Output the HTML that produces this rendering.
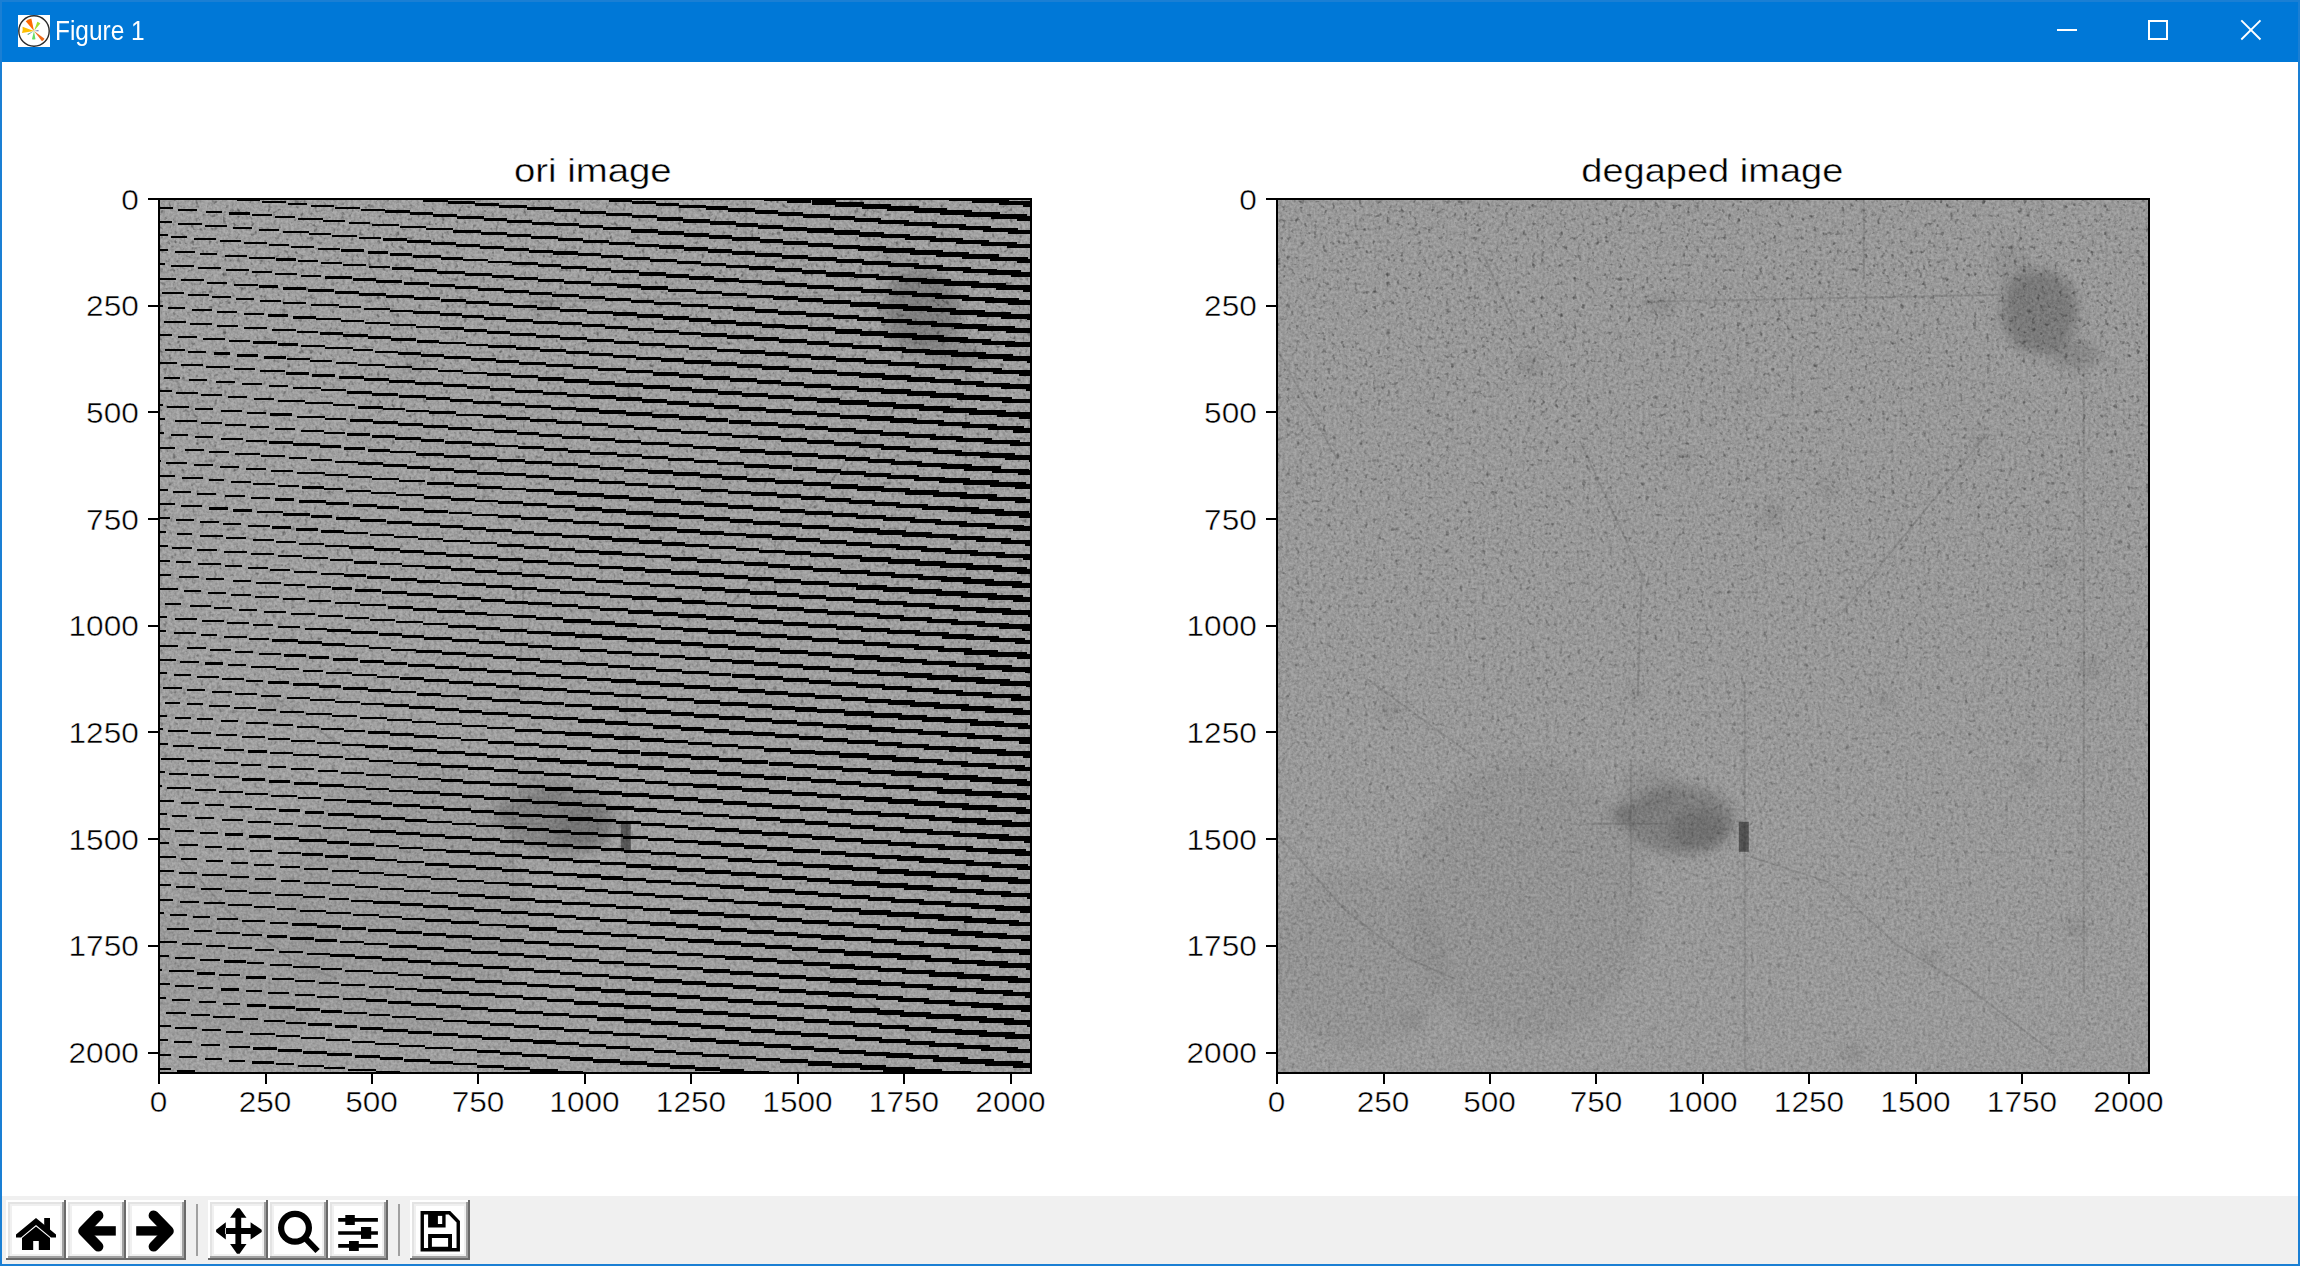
<!DOCTYPE html>
<html><head><meta charset="utf-8"><title>Figure 1</title><style>
html,body{margin:0;padding:0;width:2300px;height:1266px;overflow:hidden;background:#fff;font-family:"Liberation Sans",sans-serif;}
#win{position:absolute;left:0;top:0;width:2300px;height:1266px;background:#1a7fd4;}
#title{position:absolute;left:2px;top:2px;width:2296px;height:60px;background:#0078d7;}
#canvas{position:absolute;left:2px;top:62px;width:2296px;height:1134px;background:#fff;}
#tb{position:absolute;left:2px;top:1196px;width:2296px;height:68px;background:#f0f0f0;}
.ttxt{position:absolute;left:53px;top:13.6px;color:#fff;font-size:27px;line-height:30px;white-space:nowrap;transform:scaleX(0.905);transform-origin:0 0;}
svg{position:absolute;left:0;top:0;}
.tl{font-size:29px;stroke:#fff;stroke-width:0.45px;}
.tt{font-size:34px;stroke:#fff;stroke-width:0.4px;}
.btn{top:4px;}
.sep{position:absolute;top:8px;width:2px;height:52px;background:#a0a0a0;}
</style></head><body>
<div id="win">
<div id="title">
<svg width="32" height="32" viewBox="0 0 32 32" style="left:16px;top:13px"><rect width="32" height="32" fill="#fff"/><circle cx="16" cy="16" r="15.2" fill="#fff" stroke="#2a2a2a" stroke-width="1.4"/><path d="M16 16L7.77 6.19A12.8 12.8 0 0 1 13.34 3.48Z" fill="#ff6a00"/><path d="M16 16L4.54 11.83A12.2 12.2 0 0 1 3.99 18.12Z" fill="#ffbf00"/><path d="M16 16L19.35 6.79A9.8 9.8 0 0 1 22.30 8.49Z" fill="#a6dd2a"/><path d="M16 16L26.52 23.64A13.0 13.0 0 0 1 24.00 26.24Z" fill="#ee6a1a"/><path d="M16 16L17.46 24.27A8.4 8.4 0 0 1 13.97 24.15Z" fill="#66dd66"/><path d="M16 16L10.03 20.03A7.2 7.2 0 0 1 9.42 18.93Z" fill="#4a9a8a"/><path d="M16 16L20.46 15.37A4.5 4.5 0 0 1 20.50 16.16Z" fill="#334a99"/></svg>
<div class="ttxt">Figure 1</div>
<svg width="2296" height="60" style="left:0;top:0">
<rect x="2055" y="27" width="20" height="2" fill="#fff"/>
<rect x="2147" y="19" width="18" height="18" fill="none" stroke="#fff" stroke-width="2"/>
<path d="M2239.3 18.3L2258.5 37.5M2258.5 18.3L2239.3 37.5" stroke="#fff" stroke-width="1.9" fill="none"/>
</svg>
</div>
<div id="canvas"></div>
<div id="tb"><svg class="btn" style="left:4px" width="60" height="60" viewBox="0 0 60 60"><rect width="60" height="60" fill="#fff"/><path d="M58 0H60V60H0V58H58Z" fill="#696969"/><path d="M2 2H58V4H4V56H2Z" fill="#e3e3e3"/><path d="M56 2H58V58H2V56H56Z" fill="#a0a0a0"/><path d="M4 4H56V6H6V54H4Z M54 4H56V56H4V54H54Z" fill="#f0f0f0"/><path d="M10 34.5L30 18L50 34.5V37.5H45L30 25L15 37.5H10Z"/><rect x="38.2" y="18" width="5.8" height="13"/><path d="M16 38L30 26.4L44 38V50H32.8V41H27.2V50H16Z"/></svg><svg class="btn" style="left:64px" width="60" height="60" viewBox="0 0 60 60"><rect width="60" height="60" fill="#fff"/><path d="M58 0H60V60H0V58H58Z" fill="#696969"/><path d="M2 2H58V4H4V56H2Z" fill="#e3e3e3"/><path d="M56 2H58V58H2V56H56Z" fill="#a0a0a0"/><path d="M4 4H56V6H6V54H4Z M54 4H56V56H4V54H54Z" fill="#f0f0f0"/><path d="M32.3 15.5L17.3 31L32.3 46.5" stroke="#000" stroke-width="10.2" fill="none" stroke-linecap="round" stroke-linejoin="round"/><path d="M24 26.2H49.8V35.6H24Z"/></svg><svg class="btn" style="left:124px" width="60" height="60" viewBox="0 0 60 60"><rect width="60" height="60" fill="#fff"/><path d="M58 0H60V60H0V58H58Z" fill="#696969"/><path d="M2 2H58V4H4V56H2Z" fill="#e3e3e3"/><path d="M56 2H58V58H2V56H56Z" fill="#a0a0a0"/><path d="M4 4H56V6H6V54H4Z M54 4H56V56H4V54H54Z" fill="#f0f0f0"/><path d="M27.7 15.5L42.7 31L27.7 46.5" stroke="#000" stroke-width="10.2" fill="none" stroke-linecap="round" stroke-linejoin="round"/><path d="M10.2 26.2H36V35.6H10.2Z"/></svg><div class="sep" style="left:194px"></div><svg class="btn" style="left:206px" width="60" height="60" viewBox="0 0 60 60"><rect width="60" height="60" fill="#fff"/><path d="M58 0H60V60H0V58H58Z" fill="#696969"/><path d="M2 2H58V4H4V56H2Z" fill="#e3e3e3"/><path d="M56 2H58V58H2V56H56Z" fill="#a0a0a0"/><path d="M4 4H56V6H6V54H4Z M54 4H56V56H4V54H54Z" fill="#f0f0f0"/><path d="M27.4 17H33.2V44H27.4Z M17 28.1H44V33.9H17Z M22.1 17.8L29 8.3H31.6L38.5 17.8Z M22.1 44.1H38.5L31.6 53.7H29Z M17.8 22.3L8.1 29.7V32.1L17.8 39.5Z M42.6 22.3L53.7 29.7V32.1L42.6 39.5Z"/></svg><svg class="btn" style="left:266px" width="60" height="60" viewBox="0 0 60 60"><rect width="60" height="60" fill="#fff"/><path d="M58 0H60V60H0V58H58Z" fill="#696969"/><path d="M2 2H58V4H4V56H2Z" fill="#e3e3e3"/><path d="M56 2H58V58H2V56H56Z" fill="#a0a0a0"/><path d="M4 4H56V6H6V54H4Z M54 4H56V56H4V54H54Z" fill="#f0f0f0"/><circle cx="27" cy="27.8" r="13.9" stroke="#000" stroke-width="6.2" fill="none"/><path d="M36.5 37.5L49.6 51" stroke="#000" stroke-width="6"/></svg><svg class="btn" style="left:326px" width="60" height="60" viewBox="0 0 60 60"><rect width="60" height="60" fill="#fff"/><path d="M58 0H60V60H0V58H58Z" fill="#696969"/><path d="M2 2H58V4H4V56H2Z" fill="#e3e3e3"/><path d="M56 2H58V58H2V56H56Z" fill="#a0a0a0"/><path d="M4 4H56V6H6V54H4Z M54 4H56V56H4V54H54Z" fill="#f0f0f0"/><path d="M10.2 19.9H49.9M10.2 33H49.9M10.2 45.9H49.9" stroke="#000" stroke-width="3.6"/><rect x="17.3" y="15" width="9.5" height="10"/><rect x="33" y="27" width="10.2" height="11.9"/><rect x="21" y="41" width="9.8" height="10"/></svg><div class="sep" style="left:396px"></div><svg class="btn" style="left:408px" width="60" height="60" viewBox="0 0 60 60"><rect width="60" height="60" fill="#fff"/><path d="M58 0H60V60H0V58H58Z" fill="#696969"/><path d="M2 2H58V4H4V56H2Z" fill="#e3e3e3"/><path d="M56 2H58V58H2V56H56Z" fill="#a0a0a0"/><path d="M4 4H56V6H6V54H4Z M54 4H56V56H4V54H54Z" fill="#f0f0f0"/><path d="M12.25 12.75H39.5L48.25 21.8V49.75H12.25Z" stroke="#000" stroke-width="3.4" fill="none"/><path d="M18.1 12.75H35.6V27.5H18.1Z"/><rect x="27.9" y="15.9" width="4.3" height="8.1" fill="#fff"/><path d="M18.1 34.1H42V49.75H18.1Z M21.9 38.1V46.7H38.1V38.1Z" fill-rule="evenodd"/></svg></div>
</div>
<svg width="2300" height="1266" viewBox="0 0 2300 1266">
<defs>
<filter id="n0" x="0" y="0" width="100%" height="100%" color-interpolation-filters="sRGB">
<feTurbulence type="fractalNoise" baseFrequency="0.35" numOctaves="2" seed="3"/>
<feColorMatrix type="matrix" values="0 0 0 0 0  0 0 0 0 0  0 0 0 0 0  0.35 0 0 0 -0.1"/>
</filter>
<filter id="sp" x="0" y="0" width="100%" height="100%" color-interpolation-filters="sRGB">
<feTurbulence type="fractalNoise" baseFrequency="0.22" numOctaves="2" seed="17"/>
<feColorMatrix type="matrix" values="0 0 0 0 0  0 0 0 0 0  0 0 0 0 0  1.5 0 0 0 -0.9"/>
</filter>
<filter id="bl" x="-50%" y="-50%" width="200%" height="200%"><feGaussianBlur stdDeviation="6"/></filter>
<linearGradient id="mg" x1="0" y1="0" x2="0" y2="1"><stop offset="0" stop-color="#fff"/><stop offset="0.45" stop-color="#bbb"/><stop offset="1" stop-color="#555"/></linearGradient>
<mask id="mk" maskContentUnits="objectBoundingBox"><rect width="1" height="1" fill="url(#mg)"/></mask>
<clipPath id="c0"><rect x="158.8" y="198.8" width="872.4" height="874"/></clipPath><clipPath id="c1"><rect x="1276.8" y="198.8" width="872.4" height="874"/></clipPath>
</defs>
<rect x="158.8" y="198.8" width="872.4" height="874" fill="#adadad"/>
<rect x="158.8" y="198.8" width="872.4" height="874" filter="url(#n0)"/>
<rect x="158.8" y="198.8" width="872.4" height="874" filter="url(#sp)" mask="url(#mk)"/>
<g clip-path="url(#c0)"><g transform="translate(158.8 198.8)"><g filter="url(#bl)"><ellipse cx="763" cy="113" rx="38" ry="42" opacity="0.2"/><ellipse cx="798" cy="156" rx="25" ry="14" opacity="0.12"/><ellipse cx="735" cy="70" rx="18" ry="26" opacity="0.05"/><ellipse cx="403" cy="621" rx="55" ry="35" opacity="0.17"/><ellipse cx="423" cy="631" rx="30" ry="20" opacity="0.12"/><ellipse cx="373" cy="591" rx="30" ry="25" opacity="0.06"/><ellipse cx="345" cy="615" rx="9" ry="9" opacity="0.25"/><ellipse cx="254" cy="166" rx="10" ry="10" opacity="0.08"/><ellipse cx="113" cy="511" rx="10" ry="8" opacity="0.08"/><ellipse cx="551" cy="290" rx="8" ry="8" opacity="0.08"/><ellipse cx="814" cy="469" rx="10" ry="10" opacity="0.08"/><ellipse cx="751" cy="573" rx="8" ry="8" opacity="0.08"/><ellipse cx="137" cy="822" rx="10" ry="8" opacity="0.08"/><ellipse cx="385" cy="107" rx="12" ry="6" opacity="0.12"/><ellipse cx="250" cy="700" rx="120" ry="140" opacity="0.035"/><ellipse cx="80" cy="760" rx="90" ry="90" opacity="0.03"/><ellipse cx="496" cy="316" rx="9" ry="9" opacity="0.1"/><ellipse cx="406" cy="258" rx="7" ry="7" opacity="0.08"/><ellipse cx="779" cy="365" rx="8" ry="8" opacity="0.08"/><ellipse cx="607" cy="500" rx="8" ry="7" opacity="0.08"/><ellipse cx="800" cy="728" rx="9" ry="8" opacity="0.09"/><ellipse cx="655" cy="759" rx="8" ry="8" opacity="0.08"/><ellipse cx="576" cy="855" rx="8" ry="9" opacity="0.09"/><ellipse cx="358" cy="496" rx="7" ry="7" opacity="0.07"/><ellipse cx="703" cy="241" rx="7" ry="7" opacity="0.07"/><ellipse cx="469" cy="193" rx="8" ry="6" opacity="0.07"/></g><rect x="462" y="623" width="10" height="30" opacity="0.45"/><path d="M365 103L724 96M807 172V794M565 414L710 235M206 55L241 131M303 242L365 376L361 497M0 635L68 711L130 759L178 780M468 656L551 683L620 746L689 787L779 856M468 483V870M311 625H391M354 560V700M587 0V80M0 150L60 260M90 480L200 560" stroke="#000" stroke-width="2" fill="none" opacity="0.1"/></g></g>
<g clip-path="url(#c0)"><path d="M921.6 194.9h33.7v4.4h-33.7zM948.6 196.8h31.8v4.5h-31.8zM972.3 198.7h36.4v4.6h-36.4zM999.2 200.7h32v4.6h-32zM1023.1 202.5h8.1v4.7h-8.1zM741.6 195h22.3v3.9h-22.3zM763.9 196.8h23.2v3.9h-23.2zM787 198.6h24.4v4h-24.4zM811.5 200.4h24.1v4.1h-24.1zM835 202.3h28.7v4.2h-28.7zM861.8 204.3h28.8v4.3h-28.8zM887.2 206.3h32v4.3h-32zM914.4 208.4h32.3v4.4h-32.3zM940.4 210.3h31.2v4.5h-31.2zM964 212.2h36v4.6h-36zM990.9 214.2h36.4v4.6h-36.4zM1016.8 216.3h14.4v4.7h-14.4zM581 197.2h27.8v3.2h-27.8zM608.7 199.1h23.3v3.3h-23.3zM632.1 200.9h23.8v3.4h-23.8zM655.9 202.7h22.9v3.5h-22.9zM678.9 204.6h26.6v3.6h-26.6zM705.5 206.4h22.1v3.7h-22.1zM727.6 208.3h27.5v3.8h-27.5zM755.1 210.2h22.9v3.9h-22.9zM778 212h25.4v4h-25.4zM803.4 214h26.6v4.1h-26.6zM829.8 215.9h25.6v4.2h-25.6zM853.9 217.8h26.7v4.2h-26.7zM877.6 219.7h30.9v4.3h-30.9zM904.2 221.8h33.2v4.4h-33.2zM931.7 223.9h34.2v4.5h-34.2zM958.6 225.8h32.8v4.5h-32.8zM982.7 227.7h35v4.6h-35zM1007.7 229.5h23.5v4.7h-23.5zM1030.1 231.3h1.1v4.7h-1.1zM396.7 197.2h26.4v2.6h-26.4zM423.3 199.1h24.3v2.7h-24.3zM447.6 201.1h27.6v2.8h-27.6zM475.1 203.1h23.8v2.9h-23.8zM499 205h27.9v2.9h-27.9zM526.9 207.1h26.8v3h-26.8zM553.6 209.1h26.6v3.1h-26.6zM580.2 211.1h25.5v3.2h-25.5zM605.7 213.1h26.4v3.3h-26.4zM632.1 215h24.7v3.4h-24.7zM656.8 217h25.9v3.5h-25.9zM682.7 219h27.1v3.6h-27.1zM709.8 221h26v3.7h-26zM735.8 222.8h22.5v3.8h-22.5zM758.3 224.6h24.2v3.9h-24.2zM782.5 226.5h24.6v4h-24.6zM807.1 228.4h27v4.1h-27zM833.6 230.4h26.8v4.2h-26.8zM858.6 232.2h25.4v4.3h-25.4zM880.9 234h28.6v4.3h-28.6zM905.1 235.9h31.1v4.4h-31.1zM930.4 237.8h32.9v4.5h-32.9zM956.1 239.8h33v4.5h-33zM980.6 241.7h36.4v4.6h-36.4zM1007.1 243.6h24.1v4.7h-24.1zM1029.7 245.3h1.5v4.7h-1.5zM213.7 197.1h21.2v2.1h-21.2zM237.3 199h23v2.2h-23zM262.4 201h24v2.2h-24zM288 202.8h19.4v2.3h-19.4zM310.6 204.6h23.7v2.3h-23.7zM335.3 206.6h24.6v2.4h-24.6zM360.9 208.5h24.1v2.5h-24.1zM385 210.3h24.5v2.6h-24.5zM409.5 212.1h23v2.6h-23zM432.5 213.9h24.5v2.7h-24.5zM457.1 215.9h27.2v2.8h-27.2zM484.3 217.8h23.1v2.9h-23.1zM507.4 219.7h24.9v3h-24.9zM532.3 221.5h22.1v3.1h-22.1zM554.4 223.2h24.7v3.1h-24.7zM579.1 225.1h23.7v3.2h-23.7zM602.8 227.1h28v3.3h-28zM630.7 229.2h27.1v3.4h-27.1zM657.8 231.2h25.7v3.5h-25.7zM683.5 233.1h25.3v3.6h-25.3zM708.8 234.9h22.9v3.7h-22.9zM731.7 236.9h27.8v3.8h-27.8zM759.5 238.8h23.8v3.9h-23.8zM783.3 240.7h24.8v4h-24.8zM808.1 242.6h25.2v4.1h-25.2zM832.9 244.5h27v4.2h-27zM858.1 246.4h28.3v4.3h-28.3zM883.2 248.4h31.6v4.3h-31.6zM910.2 250.4h32.3v4.4h-32.3zM936.4 252.4h32.7v4.5h-32.7zM961.6 254.4h36.9v4.5h-36.9zM989.6 256.6h37.9v4.6h-37.9zM1017 258.5h14.2v4.7h-14.2zM158.8 206.6h13.7v2h-13.7zM178.4 208.7h18.7v2h-18.7zM205.5 210.6h16.7v2.1h-16.7zM228.9 212.4h20.8v2.1h-20.8zM252.3 214.2h19.9v2.2h-19.9zM275 216h19.7v2.3h-19.7zM298.3 217.8h24.6v2.3h-24.6zM322.9 219.7h21.7v2.4h-21.7zM348.6 221.6h21.6v2.5h-21.6zM372.2 223.6h27.2v2.5h-27.2zM399.5 225.6h26.8v2.6h-26.8zM426.3 227.7h26.5v2.7h-26.5zM452.8 229.7h27.7v2.8h-27.7zM480.5 231.8h26.8v2.9h-26.8zM507.2 233.7h23.5v3h-23.5zM530.8 235.7h27.1v3.1h-27.1zM557.9 237.6h24.9v3.1h-24.9zM582.8 239.6h26.5v3.2h-26.5zM609.3 241.6h25.4v3.3h-25.4zM634.7 243.5h24.6v3.4h-24.6zM659.3 245.3h24.2v3.5h-24.2zM683.5 247.2h24.6v3.6h-24.6zM708 249h23.9v3.7h-23.9zM731.9 250.8h22.7v3.8h-22.7zM754.6 252.7h26.9v3.9h-26.9zM781.5 254.7h26.8v4h-26.8zM808.3 256.8h28.4v4.1h-28.4zM836.2 258.9h28.1v4.2h-28.1zM862.4 260.8h28.7v4.3h-28.7zM887.7 262.8h31.3v4.3h-31.3zM914.2 264.7h29v4.4h-29zM937 266.6h33.6v4.5h-33.6zM963.1 268.5h33.6v4.5h-33.6zM987.7 270.4h33.3v4.6h-33.3zM1010.8 272.1h20.4v4.7h-20.4zM158.8 220.7h12.7v2h-12.7zM177.7 222.8h24.1v2h-24.1zM205.3 224.9h21.8v2.1h-21.8zM232.8 227h19.4v2.2h-19.4zM259.4 228.9h20v2.2h-20zM282.9 230.8h25.9v2.3h-25.9zM308.9 232.7h22v2.3h-22zM332 234.6h24.5v2.4h-24.5zM359.4 236.5h21.9v2.5h-21.9zM382.6 238.4h24.1v2.6h-24.1zM406.7 240.2h24.4v2.6h-24.4zM431.1 242.1h25.3v2.7h-25.3zM456.4 244h23.6v2.8h-23.6zM480 245.8h24v2.9h-24zM504 247.7h25v3h-25zM529.1 249.5h23.9v3h-23.9zM553 251.4h25.2v3.1h-25.2zM578.2 253.2h22.3v3.2h-22.3zM600.5 254.9h22v3.3h-22zM622.5 256.8h27v3.4h-27zM649.5 258.8h27.3v3.5h-27.3zM676.8 260.8h24.1v3.6h-24.1zM700.9 262.6h25.1v3.7h-25.1zM725.9 264.5h23.3v3.8h-23.3zM749.2 266.4h25.9v3.9h-25.9zM775.1 268.4h27.3v4h-27.3zM802.4 270.3h23.5v4.1h-23.5zM825.9 272.3h29.2v4.2h-29.2zM853.6 274.2h25.3v4.2h-25.3zM876 275.9h26.7v4.3h-26.7zM898.7 277.6h28.1v4.4h-28.1zM921.4 279.4h29.2v4.4h-29.2zM944 281.3h35.3v4.5h-35.3zM971.4 283.3h34.4v4.6h-34.4zM996.4 285.3h34.8v4.6h-34.8zM1023.2 287.3h8v4.7h-8zM158.8 234.4h8.7v2h-8.7zM171.1 236.2h15.6v2h-15.6zM194.4 238.1h21.1v2.1h-21.1zM219.5 240h21.9v2.1h-21.9zM243.8 241.9h23.2v2.2h-23.2zM268.6 243.7h19.9v2.2h-19.9zM290.8 245.6h23.3v2.3h-23.3zM317.8 247.5h22.3v2.4h-22.3zM340.7 249.4h23.7v2.4h-23.7zM367.5 251.3h20.6v2.5h-20.6zM390.3 253h21.5v2.6h-21.5zM413 254.9h27.6v2.7h-27.6zM440.6 256.8h22.1v2.7h-22.1zM462.6 258.6h25.3v2.8h-25.3zM487.9 260.5h24.4v2.9h-24.4zM512.3 262.4h25.6v3h-25.6zM537.9 264.3h23.5v3.1h-23.5zM561.4 266.2h25.1v3.2h-25.1zM586.4 268.1h24.9v3.3h-24.9zM611.4 270h27.3v3.4h-27.3zM638.6 272.1h27.3v3.5h-27.3zM665.9 274h22.7v3.6h-22.7zM688.6 275.9h25.8v3.6h-25.8zM714.4 277.8h24.4v3.7h-24.4zM738.9 279.6h23v3.8h-23zM761.9 281.3h22.8v3.9h-22.8zM784.7 283h22.6v4h-22.6zM807.2 284.9h27.1v4.1h-27.1zM833.9 287h29v4.2h-29zM861 289.1h31v4.3h-31zM888.6 291h28.5v4.3h-28.5zM912.3 292.8h29.2v4.4h-29.2zM935.3 294.7h33.9v4.5h-33.9zM961.8 296.6h31.8v4.5h-31.8zM984.7 298.4h33.8v4.6h-33.8zM1008.4 300.3h22.8v4.7h-22.8zM158.8 248.6h9.6v2h-9.6zM174.6 250.7h20v2h-20zM200.3 252.6h16.6v2.1h-16.6zM224.8 254.5h22v2.1h-22zM249.4 256.5h25.6v2.2h-25.6zM276.1 258.4h19.4v2.3h-19.4zM298.4 260.1h19.1v2.3h-19.1zM320.8 261.8h21.6v2.4h-21.6zM343.2 263.7h23.1v2.4h-23.1zM369.2 265.5h20.3v2.5h-20.3zM391.6 267.2h22.4v2.6h-22.4zM414 268.9h22.6v2.7h-22.6zM436.6 270.9h27.9v2.7h-27.9zM464.5 273h27v2.8h-27zM491.5 274.8h22v2.9h-22zM513.5 276.6h24.2v3h-24.2zM537.7 278.5h26v3.1h-26zM563.6 280.5h26.9v3.2h-26.9zM590.5 282.5h26v3.3h-26zM616.5 284.4h24.4v3.4h-24.4zM640.9 286.4h27v3.5h-27zM667.9 288.5h27.8v3.6h-27.8zM695.7 290.5h26.5v3.7h-26.5zM722.2 292.5h25.2v3.8h-25.2zM747.4 294.5h26.1v3.9h-26.1zM773.4 296.4h24.1v4h-24.1zM797.6 298.2h25.3v4.1h-25.3zM822.9 300.2h28.4v4.2h-28.4zM850 302.3h29.9v4.2h-29.9zM877.1 304.4h30.4v4.3h-30.4zM903.3 306.3h28.9v4.4h-28.9zM926.6 308h29.7v4.4h-29.7zM949.5 310h35.6v4.5h-35.6zM976.8 311.9h34.3v4.6h-34.3zM1001.4 313.9h29.8v4.7h-29.8zM1026.8 315.7h4.4v4.7h-4.4zM158.8 262.6h6.4v2h-6.4zM171.1 264.6h22.9v2h-22.9zM197.9 266.7h23.4v2.1h-23.4zM225.9 268.8h23.5v2.1h-23.5zM251.6 270.7h20v2.2h-20zM275.1 272.6h22.1v2.3h-22.1zM301.4 274.5h19.8v2.3h-19.8zM325.3 276.4h26.9v2.4h-26.9zM352.5 278.4h23.8v2.5h-23.8zM376.3 280.4h25.5v2.5h-25.5zM403.9 282.4h25v2.6h-25zM429.9 284.3h24.7v2.7h-24.7zM454.6 286.2h23.7v2.8h-23.7zM478.3 288.1h25.8v2.9h-25.8zM504.1 290h25.1v3h-25.1zM529.3 291.9h22.8v3h-22.8zM552 293.8h27.4v3.1h-27.4zM579.4 295.8h25.3v3.2h-25.3zM604.8 297.7h25.9v3.3h-25.9zM630.6 299.6h23.8v3.4h-23.8zM654.4 301.5h26.5v3.5h-26.5zM680.9 303.6h27.1v3.6h-27.1zM708 305.5h25.2v3.7h-25.2zM733.1 307.3h22.2v3.8h-22.2zM755.3 309.1h22.8v3.9h-22.8zM778.1 311h27.6v4h-27.6zM805.7 313.1h28v4.1h-28zM833.4 315h25.3v4.2h-25.3zM857 316.9h27.3v4.3h-27.3zM881.2 318.8h30.3v4.3h-30.3zM907 320.7h29.7v4.4h-29.7zM931 322.5h30.5v4.5h-30.5zM954.4 324.3h32.3v4.5h-32.3zM978.2 326.3h37.2v4.6h-37.2zM1005.6 328.3h25.6v4.7h-25.6zM1030.6 330.2h0.6v4.7h-0.6zM158.8 277.5h16.8v2h-16.8zM180.7 279.4h23.1v2h-23.1zM207.4 281.5h19.5v2.1h-19.5zM234.3 283.5h23.6v2.2h-23.6zM259.4 285.4h18.2v2.2h-18.2zM283.1 287.2h22.5v2.3h-22.5zM308.1 289.3h25.8v2.3h-25.8zM335.4 291.2h23.5v2.4h-23.5zM358.9 293.1h27.5v2.5h-27.5zM386.4 295.2h27.3v2.6h-27.3zM413.7 297.3h26.7v2.7h-26.7zM440.5 299.3h25.6v2.7h-25.6zM466 301.2h22.9v2.8h-22.9zM489 302.9h24v2.9h-24zM512.9 304.8h24.1v3h-24.1zM537 306.6h23.3v3.1h-23.3zM560.3 308.5h26.9v3.2h-26.9zM587.3 310.5h25.6v3.3h-25.6zM612.9 312.4h24.4v3.4h-24.4zM637.2 314.3h25.9v3.4h-25.9zM663.1 316.3h25.7v3.5h-25.7zM688.9 318.1h22.5v3.6h-22.5zM711.4 319.9h24.2v3.7h-24.2zM735.6 321.8h26.1v3.8h-26.1zM761.6 323.7h23.6v3.9h-23.6zM785.2 325.4h22.6v4h-22.6zM807.8 327.3h27.7v4.1h-27.7zM835.1 329.3h26.8v4.2h-26.8zM860 331.2h27.7v4.3h-27.7zM884.4 333.2h32.6v4.3h-32.6zM912.3 335.3h31.8v4.4h-31.8zM938 337.1h29.9v4.5h-29.9zM960.3 338.8h30.8v4.5h-30.8zM982.4 340.5h32.3v4.6h-32.3zM1004.8 342.4h26.4v4.7h-26.4zM1031 344.4h0.2v4.7h-0.2zM161.6 292.1h22.2v2h-22.2zM188.2 294h21.2v2.1h-21.2zM212 295.9h18.5v2.1h-18.5zM235.8 297.7h17.7v2.2h-17.7zM259.7 299.5h20.9v2.2h-20.9zM283.1 301.5h23.1v2.3h-23.1zM310.7 303.6h28v2.4h-28zM338.6 305.6h22.6v2.4h-22.6zM363.7 307.6h26.4v2.5h-26.4zM390.3 309.5h22.6v2.6h-22.6zM413.3 311.4h26.5v2.7h-26.5zM439.8 313.3h22.4v2.7h-22.4zM462.2 315h22.2v2.8h-22.2zM484.4 316.6h22v2.9h-22zM506.4 318.5h26.7v3h-26.7zM533.1 320.5h24.8v3.1h-24.8zM557.9 322.3h23.8v3.1h-23.8zM581.7 324.1h23.1v3.2h-23.1zM604.8 325.9h23.2v3.3h-23.2zM628 327.7h25.6v3.4h-25.6zM653.6 329.7h25.6v3.5h-25.6zM679.2 331.5h22.2v3.6h-22.2zM701.4 333.3h25.8v3.7h-25.8zM727.3 335.3h26.6v3.8h-26.6zM753.9 337.3h25v3.9h-25zM778.9 339.3h27.7v4h-27.7zM806.6 341.2h22.3v4.1h-22.3zM828.7 342.9h24.5v4.2h-24.5zM851.6 344.8h30.3v4.2h-30.3zM879.1 346.7h26.7v4.3h-26.7zM901.5 348.5h28.7v4.4h-28.7zM924.7 350.4h33v4.4h-33zM950.9 352.4h35.2v4.5h-35.2zM977.8 354.4h35.3v4.6h-35.3zM1003.3 356.3h27.9v4.7h-27.9zM1026.8 358.3h4.4v4.7h-4.4zM158.8 304.7h4.6v2h-4.6zM168.4 306.6h16.2v2h-16.2zM192.4 308.5h19.3v2.1h-19.3zM217.1 310.5h19.6v2.1h-19.6zM244.4 312.5h19.1v2.2h-19.1zM267.8 314.3h20.1v2.2h-20.1zM293.2 316.2h22.7v2.3h-22.7zM315.9 318h25v2.4h-25zM341.1 319.9h22.6v2.4h-22.6zM364.8 321.8h25.4v2.5h-25.4zM390.2 323.7h25.3v2.6h-25.3zM415.5 325.6h24.4v2.7h-24.4zM439.9 327.4h23.8v2.7h-23.8zM463.8 329.2h22.9v2.8h-22.9zM486.6 331h23.2v2.9h-23.2zM509.8 332.9h26.5v3h-26.5zM536.4 334.8h23.2v3.1h-23.2zM559.5 336.7h27.4v3.2h-27.4zM586.9 338.8h26.8v3.3h-26.8zM613.8 340.7h24.8v3.4h-24.8zM638.6 342.7h26v3.5h-26zM664.6 344.6h24.8v3.6h-24.8zM689.4 346.6h28v3.7h-28zM717.4 348.5h22.7v3.8h-22.7zM740.1 350.3h24.8v3.9h-24.8zM764.9 352.2h23.2v3.9h-23.2zM788.1 353.9h22.9v4h-22.9zM811 355.7h25.3v4.1h-25.3zM835.7 357.7h29.9v4.2h-29.9zM863.6 359.7h27.7v4.3h-27.7zM887.8 361.7h31.5v4.3h-31.5zM914.5 363.7h31.6v4.4h-31.6zM939.8 365.6h32.5v4.5h-32.5zM964.6 367.6h37.1v4.6h-37.1zM992.6 369.7h37.5v4.6h-37.5zM1019.4 371.6h11.8v4.7h-11.8zM163.7 320.5h22.2v2h-22.2zM190.2 322.5h21.7v2.1h-21.7zM216.5 324.6h21.3v2.1h-21.3zM244.4 326.7h22.7v2.2h-22.7zM271.6 328.8h23.9v2.2h-23.9zM297.4 330.6h20.7v2.3h-20.7zM319.6 332.3h23.4v2.4h-23.4zM343 334.2h25.1v2.4h-25.1zM368.1 336h22.9v2.5h-22.9zM391.1 337.9h24.7v2.6h-24.7zM417.3 339.8h22v2.7h-22zM439.4 341.6h26.2v2.7h-26.2zM465.6 343.5h22.8v2.8h-22.8zM488.4 345.4h27.9v2.9h-27.9zM516.3 347.4h23.5v3h-23.5zM539.8 349.3h26v3.1h-26zM565.8 351.1h23.5v3.2h-23.5zM589.3 352.9h23.5v3.3h-23.5zM612.8 354.7h23.5v3.3h-23.5zM636.2 356.6h25.1v3.4h-25.1zM661.4 358.4h22.3v3.5h-22.3zM683.7 360.3h27.4v3.6h-27.4zM711.1 362.3h26v3.7h-26zM737.1 364.2h24.9v3.8h-24.9zM762 366.2h26.8v3.9h-26.8zM788.8 368.1h22.7v4h-22.7zM811.5 369.9h25.7v4.1h-25.7zM836.6 371.7h24v4.2h-24zM858.7 373.4h26v4.3h-26zM881.6 375.3h29.4v4.3h-29.4zM906.6 377.1h28.8v4.4h-28.8zM929.6 378.9h31v4.5h-31zM953.5 380.7h30.8v4.5h-30.8zM976 382.5h34.2v4.6h-34.2zM1000.6 384.4h30.6v4.7h-30.6zM1025.6 386.4h5.6v4.7h-5.6zM158.8 333.8h12.8v2h-12.8zM178.4 335.7h18.6v2h-18.6zM203.2 337.6h21.8v2.1h-21.8zM229.1 339.5h20.9v2.1h-20.9zM253.4 341.4h23.1v2.2h-23.1zM278.2 343.3h19.8v2.3h-19.8zM301.2 345.1h23.6v2.3h-23.6zM324.7 347h27.8v2.4h-27.8zM352.5 348.9h20.5v2.5h-20.5zM374.7 350.7h22.9v2.5h-22.9zM397.6 352.4h23.4v2.6h-23.4zM421 354.2h23v2.7h-23zM443.9 356.1h26.9v2.8h-26.9zM470.8 358.1h24.8v2.8h-24.8zM495.6 359.9h23.4v2.9h-23.4zM519 361.8h26.8v3h-26.8zM545.8 363.9h26.7v3.1h-26.7zM572.5 365.8h25.1v3.2h-25.1zM597.6 367.9h28v3.3h-28zM625.6 369.9h26.9v3.4h-26.9zM652.5 372h26.4v3.5h-26.4zM678.9 373.9h24.4v3.6h-24.4zM703.3 375.8h26.2v3.7h-26.2zM729.5 377.9h27.3v3.8h-27.3zM756.8 379.8h24.4v3.9h-24.4zM781.2 381.6h22.5v4h-22.5zM803.8 383.5h27.3v4.1h-27.3zM830.8 385.5h28.2v4.2h-28.2zM857.4 387.5h26.9v4.3h-26.9zM881.2 389.4h29.9v4.3h-29.9zM906.6 391.2h29.2v4.4h-29.2zM930 393.2h34v4.5h-34zM956.9 395.1h31.8v4.5h-31.8zM980.2 396.8h32.1v4.6h-32.1zM1002.5 398.7h28.7v4.7h-28.7zM1030 400.8h1.2v4.7h-1.2zM165.2 348.7h19.6v2h-19.6zM188.3 350.6h17.7v2.1h-17.7zM213.6 352.4h16.3v2.1h-16.3zM237 354.4h20.8v2.2h-20.8zM263.5 356.3h22.7v2.2h-22.7zM287.1 358.1h22.8v2.3h-22.8zM310.1 359.9h22.3v2.3h-22.3zM335.5 361.8h21.3v2.4h-21.3zM357.8 363.6h27.2v2.5h-27.2zM385 365.7h26.7v2.6h-26.7zM411.7 367.7h26.1v2.7h-26.1zM437.8 369.7h24.8v2.7h-24.8zM462.5 371.6h24.7v2.8h-24.7zM487.3 373.4h23.4v2.9h-23.4zM510.7 375.3h27.3v3h-27.3zM538 377.4h26.1v3.1h-26.1zM564.1 379.3h24.4v3.2h-24.4zM588.5 381.2h26.3v3.3h-26.3zM614.8 383.3h27.8v3.4h-27.8zM642.6 385.4h27.4v3.5h-27.4zM670 387.3h22.2v3.6h-22.2zM692.2 389.1h26v3.7h-26zM718.2 391h23.6v3.8h-23.6zM741.8 392.9h26.4v3.9h-26.4zM768.3 394.8h25.2v4h-25.2zM793.5 396.7h23.5v4.1h-23.5zM817 398.4h23v4.1h-23zM839.2 400.4h30.2v4.2h-30.2zM867.2 402.4h29v4.3h-29zM892.5 404.4h31v4.4h-31zM918.5 406.3h31.5v4.4h-31.5zM943.4 408.3h33.3v4.5h-33.3zM968.9 410.3h37.3v4.6h-37.3zM996.8 412.2h33.2v4.6h-33.2zM1019.3 414.1h11.9v4.7h-11.9zM158.8 362.3h18.3v2h-18.3zM181.3 364.1h21.2v2h-21.2zM205.7 366.1h24.2v2.1h-24.2zM233.5 368.2h21.2v2.2h-21.2zM260.3 370.2h24.8v2.2h-24.8zM285.9 372.2h23.5v2.3h-23.5zM312.1 374.3h23.2v2.4h-23.2zM339.4 376.3h24.8v2.4h-24.8zM364.2 378.1h24.4v2.5h-24.4zM388.5 380.1h26.9v2.6h-26.9zM415.4 382.2h27.4v2.7h-27.4zM442.8 384.1h23.9v2.7h-23.9zM466.7 385.9h22.8v2.8h-22.8zM489.6 387.7h25v2.9h-25zM514.6 389.8h27.9v3h-27.9zM542.5 391.8h24.9v3.1h-24.9zM567.3 393.6h22.7v3.2h-22.7zM590 395.4h25.5v3.3h-25.5zM615.5 397.4h26.4v3.4h-26.4zM641.9 399.3h24.6v3.5h-24.6zM666.5 401.1h22.3v3.6h-22.3zM688.8 402.9h25.5v3.6h-25.5zM714.3 404.8h24.3v3.7h-24.3zM738.6 406.8h27.1v3.8h-27.1zM765.7 408.8h26.2v4h-26.2zM791.9 410.8h25.4v4.1h-25.4zM817.3 412.6h23v4.1h-23zM839.5 414.5h30.2v4.2h-30.2zM867.4 416.4h26.3v4.3h-26.3zM890 418.2h27.3v4.3h-27.3zM912.5 420h31.8v4.4h-31.8zM938.1 421.9h31.5v4.5h-31.5zM962.1 423.8h35v4.5h-35zM988.2 425.8h35.5v4.6h-35.5zM1013.4 427.8h17.8v4.7h-17.8zM163.5 376.9h16.3v2h-16.3zM189.3 378.9h17.8v2.1h-17.8zM215.6 380.9h19.7v2.1h-19.7zM241.8 383h20.2v2.2h-20.2zM268.6 384.9h19.8v2.2h-19.8zM292.8 386.9h27.9v2.3h-27.9zM320.7 389h25.3v2.4h-25.3zM346.9 391h25.3v2.5h-25.3zM372.2 393h25.3v2.5h-25.3zM398.9 395h27.2v2.6h-27.2zM426.1 397h23.8v2.7h-23.8zM449.9 398.8h23.1v2.8h-23.1zM473 400.7h27.6v2.9h-27.6zM500.7 402.7h24.7v2.9h-24.7zM525.3 404.6h25.8v3h-25.8zM551.1 406.5h24.7v3.1h-24.7zM575.8 408.3h22.7v3.2h-22.7zM598.5 410.3h27.8v3.3h-27.8zM626.3 412.3h25.3v3.4h-25.3zM651.6 414.3h27v3.5h-27zM678.7 416.3h27v3.6h-27zM705.6 418.2h22.8v3.7h-22.8zM728.5 420h22.7v3.8h-22.7zM751.2 421.9h27.1v3.9h-27.1zM778.3 423.9h26.9v4h-26.9zM805.1 425.8h22.5v4.1h-22.5zM827.5 427.7h28.3v4.2h-28.3zM854.3 429.7h28.4v4.2h-28.4zM879.7 431.6h29.3v4.3h-29.3zM904.6 433.5h31.3v4.4h-31.3zM930.2 435.5h33v4.5h-33zM956 437.5h36.2v4.5h-36.2zM983.7 439.6h36.7v4.6h-36.7zM1010.3 441.7h20.9v4.7h-20.9zM158.8 390.1h13.6v2h-13.6zM176.3 392h21.5v2h-21.5zM200.8 394h21.6v2.1h-21.6zM228.3 396h19v2.1h-19zM254 397.9h20.4v2.2h-20.4zM277.8 399.9h27.4v2.3h-27.4zM305.4 402h27.2v2.3h-27.2zM332.6 404h22.2v2.4h-22.2zM358.4 406h24.7v2.5h-24.7zM383.4 407.8h21.5v2.6h-21.5zM406.4 409.5h22.7v2.6h-22.7zM429 411.4h27.1v2.7h-27.1zM456.2 413.5h26.8v2.8h-26.8zM483 415.4h22.6v2.9h-22.6zM505.6 417.2h23.9v3h-23.9zM529.5 419.1h27v3.1h-27zM556.4 421.1h25.9v3.1h-25.9zM582.3 423.1h25.5v3.2h-25.5zM607.7 425h26.4v3.3h-26.4zM634.2 426.9h23.1v3.4h-23.1zM657.3 428.7h23.6v3.5h-23.6zM680.9 430.6h26.8v3.6h-26.8zM707.8 432.6h24.6v3.7h-24.6zM732.4 434.5h25.2v3.8h-25.2zM757.6 436.3h23.3v3.9h-23.3zM780.9 438.2h26.1v4h-26.1zM807 440.2h27.2v4.1h-27.2zM833.8 442.2h27v4.2h-27zM858.9 444h25.5v4.3h-25.5zM881.3 445.8h28.7v4.3h-28.7zM905.5 447.8h32.8v4.4h-32.8zM932.5 449.7h29.9v4.5h-29.9zM955.2 451.5h33.5v4.5h-33.5zM980.2 453.4h34.8v4.6h-34.8zM1005.1 455.3h26.1v4.7h-26.1zM1029.4 457.1h1.8v4.7h-1.8zM158.8 403.5h4.4v2h-4.4zM167.4 405.5h21.6v2h-21.6zM194.8 407.6h17.9v2.1h-17.9zM221.1 409.6h21.1v2.1h-21.1zM246.5 411.5h19.7v2.2h-19.7zM270.4 413.4h21.9v2.2h-21.9zM297 415.5h27.7v2.3h-27.7zM324.8 417.5h21.5v2.4h-21.5zM349.5 419.4h23.8v2.5h-23.8zM373.3 421.2h24.7v2.5h-24.7zM398 423.1h25.2v2.6h-25.2zM423.3 425h24.3v2.7h-24.3zM447.6 426.9h24v2.8h-24zM471.6 428.6h22.2v2.8h-22.2zM493.8 430.3h23v2.9h-23zM516.8 432.1h22.1v3h-22.1zM538.9 433.8h22.9v3.1h-22.9zM561.8 435.7h28v3.2h-28zM589.8 437.7h24.8v3.3h-24.8zM614.6 439.7h26.8v3.4h-26.8zM641.4 441.8h27.3v3.5h-27.3zM668.8 443.7h24.2v3.6h-24.2zM692.9 445.5h22.9v3.7h-22.9zM715.8 447.3h24.3v3.8h-24.3zM740.1 449.2h24.6v3.9h-24.6zM764.7 451.1h27v4h-27zM791.7 453.1h25.9v4.1h-25.9zM817.6 455.2h28v4.1h-28zM844.7 457.1h25.3v4.2h-25.3zM867.6 458.8h27.2v4.3h-27.2zM891.1 460.7h30.6v4.3h-30.6zM916.7 462.6h30.3v4.4h-30.3zM940.6 464.4h31.2v4.5h-31.2zM964.2 466.4h36.4v4.6h-36.4zM991.5 468.5h37v4.6h-37zM1018 470.4h13.2v4.7h-13.2zM158.8 418.2h6.2v2h-6.2zM174.6 420.2h22v2h-22zM201.4 422.1h20.6v2.1h-20.6zM225.3 424h20.5v2.1h-20.5zM250 425.9h18.8v2.2h-18.8zM274.8 427.8h20.6v2.3h-20.6zM301 429.7h22.8v2.3h-22.8zM324 431.5h20.6v2.4h-20.6zM347 433.3h23.4v2.5h-23.4zM371.5 435.2h23.6v2.5h-23.6zM395.1 437h25.4v2.6h-25.4zM420.5 438.9h23.9v2.7h-23.9zM444.5 440.9h27.6v2.8h-27.6zM472.1 442.8h22.4v2.8h-22.4zM494.6 444.5h22.9v2.9h-22.9zM517.5 446.4h26.3v3h-26.3zM543.8 448.3h24.1v3.1h-24.1zM567.9 450.1h22.1v3.2h-22.1zM590 452h27.2v3.3h-27.2zM617.2 453.9h24.8v3.4h-24.8zM642 455.9h25.5v3.5h-25.5zM667.5 457.8h26.5v3.6h-26.5zM694 459.7h23.5v3.7h-23.5zM717.4 461.6h26.9v3.8h-26.9zM744.3 463.6h25.1v3.9h-25.1zM769.4 465.4h23v4h-23zM792.5 467.2h24v4.1h-24zM816.4 469h24.1v4.1h-24.1zM839.7 470.8h26v4.2h-26zM863.6 472.7h27.1v4.3h-27.1zM887.3 474.6h31.9v4.3h-31.9zM914.3 476.6h31.1v4.4h-31.1zM939.1 478.4h30.9v4.5h-30.9zM962.5 480.4h36.4v4.5h-36.4zM989.9 482.4h35.8v4.6h-35.8zM1015.3 484.3h15.9v4.7h-15.9zM158.8 432h5.2v2h-5.2zM171.4 433.9h16.1v2h-16.1zM195.1 435.8h18.3v2.1h-18.3zM220.6 437.8h22.7v2.1h-22.7zM245.7 439.6h20.9v2.2h-20.9zM268.5 441.4h24v2.2h-24zM292.9 443.4h27.2v2.3h-27.2zM320.3 445.4h20.3v2.4h-20.3zM344.4 447.2h20.8v2.4h-20.8zM368.1 449h22.2v2.5h-22.2zM390.3 450.8h26v2.6h-26zM416.3 452.8h27.5v2.7h-27.5zM443.8 454.9h26v2.8h-26zM469.8 456.9h27.6v2.8h-27.6zM497.3 459h27.7v2.9h-27.7zM525.1 461.1h26.6v3h-26.6zM551.6 463.1h26v3.1h-26zM577.7 465h22.4v3.2h-22.4zM600 466.7h23.6v3.3h-23.6zM623.6 468.5h24.1v3.4h-24.1zM647.7 470.4h24.8v3.5h-24.8zM672.5 472.4h27.8v3.6h-27.8zM700.3 474.3h22.1v3.7h-22.1zM722.4 476.1h25v3.8h-25zM747.4 478.1h27.9v3.9h-27.9zM775.4 480.2h27.2v4h-27.2zM802.6 482.3h28.1v4.1h-28.1zM830.5 484.3h27.8v4.2h-27.8zM856.6 486.3h27.2v4.3h-27.2zM880.8 488.1h28.7v4.3h-28.7zM905.1 490.1h33.8v4.4h-33.8zM933 492.2h34.4v4.5h-34.4zM960.1 494.3h36.8v4.5h-36.8zM988 496.5h37.7v4.6h-37.7zM1015.4 498.5h15.8v4.7h-15.8zM158.8 447.1h16.3v2h-16.3zM184.6 449.1h19v2.1h-19zM208.9 451h20.2v2.1h-20.2zM235 453h24.5v2.2h-24.5zM260.9 455.1h24.4v2.2h-24.4zM288.5 457h18.9v2.3h-18.9zM310.9 458.7h21.4v2.3h-21.4zM334.5 460.5h23.2v2.4h-23.2zM357.7 462.4h24.8v2.5h-24.8zM382.8 464.3h23.9v2.6h-23.9zM406.7 466.1h23.1v2.6h-23.1zM429.8 467.9h24.3v2.7h-24.3zM454.1 469.7h22.7v2.8h-22.7zM476.8 471.6h27v2.9h-27zM503.8 473.4h22.2v3h-22.2zM526.1 475.2h23.1v3h-23.1zM549.1 477h25.2v3.1h-25.2zM574.3 478.9h24.4v3.2h-24.4zM598.7 480.8h26.7v3.3h-26.7zM625.4 482.7h22.4v3.4h-22.4zM647.8 484.6h26.8v3.5h-26.8zM674.6 486.6h26.5v3.6h-26.5zM701.1 488.7h27.2v3.7h-27.2zM728.4 490.5h22.4v3.8h-22.4zM750.7 492.4h25.8v3.9h-25.8zM776.5 494.3h24.1v4h-24.1zM800.6 496.1h24.1v4.1h-24.1zM824.7 498h25.8v4.2h-25.8zM849.3 499.8h25.4v4.2h-25.4zM872 501.6h28.3v4.3h-28.3zM896.4 503.5h31.1v4.4h-31.1zM922.2 505.5h32.3v4.4h-32.3zM947.8 507.3h30.8v4.5h-30.8zM970.6 509.1h33.5v4.6h-33.5zM994.8 511h34.6v4.6h-34.6zM1018.7 512.8h12.5v4.7h-12.5zM158.8 459.8h2.4v2h-2.4zM166.1 461.9h20.7v2h-20.7zM193.9 464h19v2.1h-19zM219.6 466h19.8v2.1h-19.8zM246.4 468h19.3v2.2h-19.3zM271.3 469.9h22.1v2.2h-22.1zM297.2 472h27.4v2.3h-27.4zM325 473.9h23v2.4h-23zM348 475.7h23.9v2.5h-23.9zM371.9 477.7h26.8v2.5h-26.8zM398.7 479.8h26.7v2.6h-26.7zM426.6 481.9h27.1v2.7h-27.1zM453.6 483.8h23.7v2.8h-23.7zM477.3 485.6h24.9v2.9h-24.9zM502.3 487.5h23.5v2.9h-23.5zM525.8 489.4h27.8v3h-27.8zM553.6 491.4h23.6v3.1h-23.6zM577.2 493.3h26.8v3.2h-26.8zM604 495.3h25.1v3.3h-25.1zM629.2 497.2h24.8v3.4h-24.8zM654 499.2h27.1v3.5h-27.1zM681.1 501.1h23.3v3.6h-23.3zM704.4 502.9h23.3v3.7h-23.3zM727.7 504.7h25.3v3.8h-25.3zM753 506.7h26.7v3.9h-26.7zM779.7 508.7h25.4v4h-25.4zM805.1 510.7h27.4v4.1h-27.4zM832.1 512.6h25.8v4.2h-25.8zM856.2 514.6h30.2v4.3h-30.2zM883.3 516.6h31.4v4.3h-31.4zM910.1 518.6h31.2v4.4h-31.2zM935.2 520.5h31.4v4.5h-31.4zM959.2 522.5h36.1v4.5h-36.1zM986.5 524.6h37.2v4.6h-37.2zM1013.5 526.4h17.7v4.7h-17.7zM158.8 475.2h16.3v2h-16.3zM181.9 477.2h20.9v2h-20.9zM208.5 479.1h15.8v2.1h-15.8zM231 480.8h20.3v2.1h-20.3zM253.3 482.6h21.3v2.2h-21.3zM278.3 484.5h20.3v2.3h-20.3zM301.7 486.2h22.1v2.3h-22.1zM323.8 487.9h19v2.4h-19zM346.2 489.7h24.8v2.4h-24.8zM371.1 491.7h25.2v2.5h-25.2zM396.3 493.7h27.6v2.6h-27.6zM423.9 495.8h26.9v2.7h-26.9zM450.8 497.7h24.1v2.8h-24.1zM474.9 499.5h23.5v2.9h-23.5zM498.4 501.3h24.1v2.9h-24.1zM522.5 503.2h24.5v3h-24.5zM547 505.2h27.9v3.1h-27.9zM574.9 507.3h27.5v3.2h-27.5zM602.4 509.2h23.7v3.3h-23.7zM626.1 511.2h26.7v3.4h-26.7zM652.9 513.2h25.7v3.5h-25.7zM678.5 515.1h25.9v3.6h-25.9zM704.4 517.1h25.7v3.7h-25.7zM730.1 518.9h22.8v3.8h-22.8zM753 520.8h26.9v3.9h-26.9zM779.9 522.7h22.3v4h-22.3zM802.2 524.6h27.1v4.1h-27.1zM829.1 526.5h25.2v4.2h-25.2zM852.8 528.3h27v4.2h-27zM877 530.2h29.2v4.3h-29.2zM902 532.1h29.7v4.4h-29.7zM926.1 533.9h31v4.4h-31zM950.2 535.9h34.5v4.5h-34.5zM976.4 537.8h34.7v4.6h-34.7zM1001.5 539.7h29.7v4.7h-29.7zM1024.8 541.6h6.4v4.7h-6.4zM158.8 488.7h8.7v2h-8.7zM172.6 490.5h18.5v2h-18.5zM196.6 492.5h19.6v2.1h-19.6zM224.5 494.6h20.3v2.1h-20.3zM250.8 496.5h19.5v2.2h-19.5zM275.1 498.4h19.2v2.3h-19.2zM298.6 500.3h27.1v2.3h-27.1zM325.7 502.4h23.4v2.4h-23.4zM352.6 504.3h24.8v2.5h-24.8zM377.4 506.1h21.1v2.5h-21.1zM399.7 507.9h24.2v2.6h-24.2zM423.8 509.8h24.6v2.7h-24.6zM448.5 511.6h23.2v2.8h-23.2zM471.6 513.5h26v2.8h-26zM497.6 515.4h23.6v2.9h-23.6zM521.2 517.3h27.2v3h-27.2zM548.4 519.3h24.2v3.1h-24.2zM572.5 521.2h26v3.2h-26zM598.6 523.1h25v3.3h-25zM623.5 525.1h26.1v3.4h-26.1zM649.7 527.1h27.4v3.5h-27.4zM677.1 529h22.9v3.6h-22.9zM700 530.8h24.2v3.7h-24.2zM724.3 532.6h22.1v3.8h-22.1zM746.4 534.4h26v3.9h-26zM772.4 536.3h23.4v4h-23.4zM795.8 538.1h23.9v4.1h-23.9zM819.6 540h27.5v4.2h-27.5zM846 541.9h26.1v4.2h-26.1zM869.6 543.8h30.4v4.3h-30.4zM896.2 545.8h30.3v4.4h-30.3zM921.2 547.7h30v4.4h-30zM944.7 549.5h33.4v4.5h-33.4zM970.1 551.5h34.9v4.6h-34.9zM995.6 553.5h35.6v4.6h-35.6zM1023.1 555.4h8.1v4.7h-8.1zM158.8 503.3h15.7v2h-15.7zM181.1 505.4h20.8v2h-20.8zM208.6 507.4h19.4v2.1h-19.4zM232.5 509.3h19.1v2.2h-19.1zM257.4 511.2h25.4v2.2h-25.4zM283.3 513.3h26.3v2.3h-26.3zM310.6 515.3h21.3v2.3h-21.3zM336.4 517.2h23.2v2.4h-23.2zM359.6 519.1h26.5v2.5h-26.5zM386.7 521.1h25.2v2.6h-25.2zM411.9 523.1h27.8v2.7h-27.8zM439.7 525.1h23.7v2.7h-23.7zM463.3 526.8h22.7v2.8h-22.7zM486 528.7h25.8v2.9h-25.8zM511.9 530.5h22.5v3h-22.5zM534.4 532.5h27.8v3.1h-27.8zM562.1 534.5h26.4v3.2h-26.4zM588.5 536.4h23.2v3.3h-23.2zM611.7 538.3h27.1v3.4h-27.1zM638.8 540.2h22.9v3.4h-22.9zM661.6 542h23v3.5h-23zM684.7 543.8h24.1v3.6h-24.1zM708.8 545.7h26.9v3.7h-26.9zM735.7 547.6h22.9v3.8h-22.9zM758.6 549.5h26.6v3.9h-26.6zM785.2 551.4h25.3v4h-25.3zM810.4 553.3h23.3v4.1h-23.3zM833.3 555.2h28.7v4.2h-28.7zM860.1 557.3h30.9v4.3h-30.9zM887.7 559.4h32.6v4.3h-32.6zM915.4 561.4h30.5v4.4h-30.5zM939.6 563.3h33.8v4.5h-33.8zM965.7 565.3h36.2v4.6h-36.2zM992.8 567.3h34.5v4.6h-34.5zM1016.7 569.1h14.5v4.7h-14.5zM158.8 517.2h11.5v2h-11.5zM175.8 519h17.8v2h-17.8zM200.1 520.8h18.7v2.1h-18.7zM223.1 522.6h18.2v2.1h-18.2zM247.8 524.5h22.3v2.2h-22.3zM271.8 526.4h19.6v2.2h-19.6zM295.8 528.2h22.3v2.3h-22.3zM320.9 530.1h23.4v2.4h-23.4zM344.3 532h23.9v2.4h-23.9zM369.6 533.9h23.9v2.5h-23.9zM393.5 535.7h24.2v2.6h-24.2zM417.8 537.6h24.8v2.7h-24.8zM442.6 539.5h27.1v2.8h-27.1zM469.7 541.6h27.2v2.8h-27.2zM496.9 543.7h26.8v2.9h-26.8zM523.8 545.7h24.9v3h-24.9zM548.6 547.6h26.6v3.1h-26.6zM575.3 549.5h23.6v3.2h-23.6zM598.9 551.3h22.6v3.3h-22.6zM621.5 553h23v3.4h-23zM644.5 554.9h26.4v3.5h-26.4zM670.9 556.9h25.9v3.6h-25.9zM696.8 558.8h23.9v3.7h-23.9zM720.7 560.6h23v3.8h-23zM743.7 562.4h23.8v3.9h-23.8zM767.5 564.1h22.8v4h-22.8zM790.3 565.8h22.5v4.1h-22.5zM812.8 567.8h28.4v4.1h-28.4zM840.4 569.8h29.1v4.2h-29.1zM867.3 571.8h27.4v4.3h-27.4zM891.1 573.7h32v4.4h-32zM918.1 575.6h28.7v4.4h-28.7zM940.5 577.4h30.4v4.5h-30.4zM963.2 579.1h30.9v4.5h-30.9zM985.3 580.9h36.8v4.6h-36.8zM1011.9 583h19.3v4.7h-19.3zM158.8 531.2h7.2v2h-7.2zM176.6 533.1h15.8v2h-15.8zM199.5 535h23.3v2.1h-23.3zM225.9 537.1h20v2.1h-20zM253.4 539h20.3v2.2h-20.3zM275.7 540.8h20.7v2.3h-20.7zM299.1 542.7h24.8v2.3h-24.8zM325.4 544.6h23.6v2.4h-23.6zM349 546.4h25.1v2.5h-25.1zM374.1 548.4h25.8v2.5h-25.8zM399.9 550.3h23.8v2.6h-23.8zM423.7 552h22.3v2.7h-22.3zM446 553.9h27.2v2.8h-27.2zM473.2 555.9h24.4v2.9h-24.4zM497.6 557.8h25.5v2.9h-25.5zM523.1 559.7h24.9v3h-24.9zM548 561.7h25.9v3.1h-25.9zM573.9 563.6h25v3.2h-25zM599 565.5h23.7v3.3h-23.7zM622.6 567.2h22v3.4h-22zM644.7 569h26.4v3.5h-26.4zM671.1 571.1h27.7v3.6h-27.7zM698.8 573.1h25v3.7h-25zM723.8 575h24.4v3.8h-24.4zM748.1 576.9h25.6v3.9h-25.6zM773.7 578.9h27.4v4h-27.4zM801.2 581h27.4v4.1h-27.4zM828.5 583.1h29.4v4.2h-29.4zM856.3 585.2h30.3v4.3h-30.3zM883.4 587.2h30v4.3h-30zM908.9 589.2h33.2v4.4h-33.2zM936 591.2h32.4v4.5h-32.4zM961 593.2h35.9v4.5h-35.9zM988 595.2h35.1v4.6h-35.1zM1012.9 597.1h18.3v4.7h-18.3zM158.8 545.2h8.7v2h-8.7zM172.1 547h19.7v2h-19.7zM196.8 549h20.1v2.1h-20.1zM224.3 551.1h22.3v2.1h-22.3zM250.9 553.1h22.8v2.2h-22.8zM277.6 555.1h24.5v2.3h-24.5zM302.7 557.1h25.7v2.3h-25.7zM329.6 559h23.2v2.4h-23.2zM353.6 561h23.4v2.5h-23.4zM379.8 562.8h22.1v2.5h-22.1zM401.9 564.5h23v2.6h-23zM424.9 566.4h26v2.7h-26zM450.9 568.3h23.8v2.8h-23.8zM474.7 570.1h22.5v2.9h-22.5zM497.2 571.8h24.3v2.9h-24.3zM521.5 573.7h23.3v3h-23.3zM544.8 575.6h27.1v3.1h-27.1zM571.9 577.5h24.3v3.2h-24.3zM596.2 579.5h27.1v3.3h-27.1zM623.2 581.5h26.9v3.4h-26.9zM650.1 583.5h24.4v3.5h-24.4zM674.6 585.5h27.4v3.6h-27.4zM701.9 587.4h23.2v3.7h-23.2zM725.1 589.2h24.6v3.8h-24.6zM749.7 591.2h27v3.9h-27zM776.7 593.1h22.7v4h-22.7zM799.4 594.9h27v4.1h-27zM826.4 597h28.2v4.2h-28.2zM853.1 598.9h25.9v4.2h-25.9zM876.2 600.8h31.2v4.3h-31.2zM903.2 602.8h31.4v4.4h-31.4zM928.9 604.8h31.5v4.5h-31.5zM953.3 606.6h31.3v4.5h-31.3zM976.3 608.4h35.1v4.6h-35.1zM1001.7 610.4h29.5v4.7h-29.5zM1028.3 612.4h2.9v4.7h-2.9zM158.8 559.5h11.6v2h-11.6zM176.2 561.3h14.6v2h-14.6zM198.4 563.2h22.4v2.1h-22.4zM224.8 565.1h17.1v2.1h-17.1zM247.9 566.8h20.5v2.2h-20.5zM270.3 568.6h19.3v2.2h-19.3zM294.2 570.6h22.7v2.3h-22.7zM321.3 572.5h22.6v2.4h-22.6zM343.9 574.2h21.7v2.4h-21.7zM367.2 576h22.5v2.5h-22.5zM390.8 577.9h25.9v2.6h-25.9zM416.7 579.8h23.4v2.7h-23.4zM440.1 581.5h22.2v2.7h-22.2zM462.2 583.3h23.9v2.8h-23.9zM486.2 585.2h25.8v2.9h-25.8zM512 587.1h24.6v3h-24.6zM536.6 588.9h23.1v3.1h-23.1zM559.7 590.8h25.1v3.2h-25.1zM584.8 592.7h25.2v3.2h-25.2zM609.9 594.5h22.2v3.3h-22.2zM632.1 596.3h25.1v3.4h-25.1zM657.2 598.2h24.6v3.5h-24.6zM681.8 600h23.1v3.6h-23.1zM704.9 601.7h22.1v3.7h-22.1zM727 603.5h24.1v3.8h-24.1zM751.1 605.4h26.2v3.9h-26.2zM777.4 607.4h27v4h-27zM804.4 609.3h23.2v4.1h-23.2zM827.4 611.2h27.7v4.2h-27.7zM853.6 613.1h26.6v4.2h-26.6zM877.3 614.8h26.3v4.3h-26.3zM899.5 616.7h32.4v4.4h-32.4zM926.5 618.7h31.4v4.4h-31.4zM951 620.6h34.1v4.5h-34.1zM976.8 622.5h31.7v4.6h-31.7zM998.9 624.2h32.3v4.6h-32.3zM1021.9 626h9.3v4.7h-9.3zM158.8 573.7h12.1v2h-12.1zM179 575.8h20.1v2h-20.1zM205.7 577.9h18.4v2.1h-18.4zM232.5 579.8h18.6v2.1h-18.6zM256.2 581.8h25.2v2.2h-25.2zM283.9 583.7h20.6v2.3h-20.6zM307 585.6h24.4v2.3h-24.4zM331.5 587.4h20.8v2.4h-20.8zM355.4 589.3h25.2v2.5h-25.2zM382.1 591.3h24.5v2.6h-24.5zM406.6 593.3h26.6v2.6h-26.6zM433.2 595.2h23.5v2.7h-23.5zM456.7 597h24.2v2.8h-24.2zM481 598.8h24v2.9h-24zM504.9 600.6h23.3v3h-23.3zM528.3 602.4h23.3v3h-23.3zM551.6 604.3h26v3.1h-26zM577.6 606.2h22.7v3.2h-22.7zM600.3 608.1h27.4v3.3h-27.4zM627.7 610.1h25.4v3.4h-25.4zM653 612h24.7v3.5h-24.7zM677.8 614h27.9v3.6h-27.9zM705.6 616.1h28v3.7h-28zM733.6 618.1h24.3v3.8h-24.3zM757.9 620h25.4v3.9h-25.4zM783.3 621.9h25v4h-25zM808.3 623.9h28.3v4.1h-28.3zM836.1 625.9h26.6v4.2h-26.6zM860.8 627.9h29.6v4.3h-29.6zM887.1 629.9h32.7v4.3h-32.7zM914.9 632h33.7v4.4h-33.7zM942.3 634h31.8v4.5h-31.8zM966.3 635.8h32.9v4.6h-32.9zM990.2 637.7h35.2v4.6h-35.2zM1015 639.6h16.2v4.7h-16.2zM158.8 588.3h19.6v2h-19.6zM184.3 590.2h16.7v2.1h-16.7zM208.4 592h17.8v2.1h-17.8zM231.3 593.8h19.5v2.1h-19.5zM254.7 595.8h24.4v2.2h-24.4zM282.6 597.9h22.3v2.3h-22.3zM309.1 599.9h22.1v2.3h-22.1zM334.5 601.8h25.9v2.4h-25.9zM360.4 603.9h25.2v2.5h-25.2zM387.8 605.9h25.3v2.6h-25.3zM413.1 607.8h24.3v2.7h-24.3zM437.4 609.8h27.3v2.7h-27.3zM464.7 611.7h22.6v2.8h-22.6zM487.3 613.5h25.8v2.9h-25.8zM513.1 615.4h23.2v3h-23.2zM536.3 617.3h26.6v3.1h-26.6zM563 619.4h27.8v3.2h-27.8zM590.8 621.3h24.1v3.3h-24.1zM615 623.1h22.1v3.4h-22.1zM637.1 624.8h23.6v3.4h-23.6zM660.7 626.6h22.6v3.5h-22.6zM683.3 628.4h24.9v3.6h-24.9zM708.2 630.4h27.5v3.7h-27.5zM735.7 632.4h25.6v3.8h-25.6zM761.3 634.4h25.7v3.9h-25.7zM787 636.3h25.3v4h-25.3zM812.2 638.2h26.7v4.1h-26.7zM838.3 640.2h26.7v4.2h-26.7zM862.9 642h27.3v4.3h-27.3zM886.7 644h32.3v4.3h-32.3zM914.2 646h30.1v4.4h-30.1zM938.1 647.9h33.7v4.5h-33.7zM964.2 649.9h34.2v4.6h-34.2zM989.4 651.9h37.8v4.6h-37.8zM1016.7 653.9h14.5v4.7h-14.5zM164.7 602.9h15.9v2h-15.9zM189.6 604.8h21.1v2.1h-21.1zM214.3 606.7h17.6v2.1h-17.6zM238.7 608.6h18.7v2.2h-18.7zM264.3 610.6h21.7v2.2h-21.7zM291 612.7h23.6v2.3h-23.6zM318.3 614.7h24.2v2.4h-24.2zM344.8 616.7h23.9v2.4h-23.9zM369.9 618.7h25.5v2.5h-25.5zM395.5 620.7h27.9v2.6h-27.9zM423.4 622.7h24.4v2.7h-24.4zM447.8 624.7h27.9v2.8h-27.9zM475.7 626.7h24.6v2.9h-24.6zM500.3 628.7h26.9v2.9h-26.9zM527.3 630.6h23.2v3h-23.2zM550.5 632.4h24.8v3.1h-24.8zM575.3 634.4h27v3.2h-27zM602.3 636.4h24.8v3.3h-24.8zM627.1 638.4h27.9v3.4h-27.9zM655 640.4h25.9v3.5h-25.9zM680.9 642.2h22.1v3.6h-22.1zM703 644h24.9v3.7h-24.9zM727.9 646h27.1v3.8h-27.1zM755 648h25.2v3.9h-25.2zM780.1 650h27.5v4h-27.5zM807.7 651.9h24.2v4.1h-24.2zM831.5 653.7h23.6v4.2h-23.6zM853.5 655.4h26.5v4.2h-26.5zM877.1 657.2h27v4.3h-27zM899.9 658.9h27.5v4.4h-27.5zM922 660.8h33.5v4.4h-33.5zM948.8 662.9h35.2v4.5h-35.2zM975.8 664.9h36.1v4.6h-36.1zM1002.2 666.8h29v4.7h-29zM1025 668.7h6.2v4.7h-6.2zM158.8 615.9h8.3v2h-8.3zM175.1 617.9h21.8v2h-21.8zM202.3 619.9h21.4v2.1h-21.4zM227.3 621.8h21.8v2.1h-21.8zM252.5 623.8h20.4v2.2h-20.4zM278.3 625.8h21.9v2.3h-21.9zM304.7 627.6h22v2.3h-22zM326.7 629.4h24.6v2.4h-24.6zM351.3 631.4h26.8v2.5h-26.8zM379.3 633.4h22.3v2.5h-22.3zM402 635.1h22.1v2.6h-22.1zM424 637h27.7v2.7h-27.7zM451.8 639.1h27.1v2.8h-27.1zM478.9 641.1h26.4v2.9h-26.4zM505.3 643h22.3v3h-22.3zM527.6 644.8h24.2v3h-24.2zM551.8 646.7h27.9v3.1h-27.9zM579.7 648.8h27v3.2h-27zM606.6 650.8h25.6v3.3h-25.6zM632.2 652.8h27.2v3.4h-27.2zM659.5 654.8h25.5v3.5h-25.5zM685 656.8h24.6v3.6h-24.6zM709.5 658.5h22.1v3.7h-22.1zM731.6 660.2h22.5v3.8h-22.5zM754.1 662h23.7v3.9h-23.7zM777.8 663.8h25.3v4h-25.3zM803.1 665.8h26.5v4.1h-26.5zM829.4 667.7h24.2v4.2h-24.2zM852 669.5h27.8v4.2h-27.8zM877 671.5h30.9v4.3h-30.9zM903.7 673.4h28.7v4.4h-28.7zM926.8 675.2h31.5v4.4h-31.5zM951.4 677.1h33.1v4.5h-33.1zM976.2 679h33.7v4.6h-33.7zM1000.2 680.9h31v4.6h-31zM1025.7 682.7h5.5v4.7h-5.5zM158.8 629.9h6.7v2h-6.7zM173.7 631.9h22.4v2h-22.4zM200.6 633.8h16.3v2.1h-16.3zM224 635.7h22.6v2.1h-22.6zM249.3 637.5h19.9v2.2h-19.9zM271.6 639.4h26.3v2.2h-26.3zM298.3 641.3h23.2v2.3h-23.2zM321.5 643.1h23.2v2.4h-23.2zM344.9 644.9h23.7v2.4h-23.7zM368.6 646.7h22.5v2.5h-22.5zM391 648.5h25v2.6h-25zM416 650.4h25.8v2.7h-25.8zM441.8 652.3h24.4v2.7h-24.4zM466.1 654.3h27.1v2.8h-27.1zM493.2 656.2h23.1v2.9h-23.1zM516.4 658h23.6v3h-23.6zM539.9 659.7h22.4v3.1h-22.4zM562.3 661.5h23.6v3.2h-23.6zM585.9 663.2h22.1v3.2h-22.1zM608 664.9h22v3.3h-22zM630.1 666.7h26v3.4h-26zM656.1 668.7h26.3v3.5h-26.3zM682.4 670.7h26.5v3.6h-26.5zM708.8 672.6h22.6v3.7h-22.6zM731.5 674.4h23.3v3.8h-23.3zM754.8 676.3h28v3.9h-28zM782.7 678.3h25.9v4h-25.9zM808.6 680.2h22.4v4.1h-22.4zM830.7 682h27.4v4.2h-27.4zM856.4 684h28.3v4.3h-28.3zM881.6 685.9h30v4.3h-30zM907.1 687.9h32.2v4.4h-32.2zM933.4 689.8h29.7v4.5h-29.7zM955.9 691.7h36.1v4.5h-36.1zM983.4 693.8h37.7v4.6h-37.7zM1011 695.8h20.2v4.7h-20.2zM159.7 644.9h18.2v2h-18.2zM187.3 646.9h18.9v2.1h-18.9zM210 648.7h21.2v2.1h-21.2zM234.9 650.6h17.6v2.2h-17.6zM258.9 652.5h22.1v2.2h-22.1zM283.9 654.4h22.4v2.3h-22.4zM309.2 656.3h19.8v2.3h-19.8zM333.2 658.2h25.2v2.4h-25.2zM359.5 660.2h24.7v2.5h-24.7zM384.2 662h22.6v2.6h-22.6zM408.3 664h26.8v2.6h-26.8zM435 665.9h24.1v2.7h-24.1zM459.1 667.9h27.7v2.8h-27.7zM486.8 669.9h24.7v2.9h-24.7zM511.5 671.8h24.8v3h-24.8zM536.3 673.7h25.1v3.1h-25.1zM561.4 675.6h25.6v3.2h-25.6zM587 677.5h24.3v3.3h-24.3zM611.3 679.4h24.2v3.3h-24.2zM635.5 681.2h24.5v3.4h-24.5zM660 683.1h24.1v3.5h-24.1zM684 685h26.2v3.6h-26.2zM710.2 687h27.5v3.7h-27.5zM737.7 689.1h27.3v3.8h-27.3zM765.1 691h22.6v3.9h-22.6zM787.7 692.9h27.4v4.1h-27.4zM815.1 695h27.1v4.1h-27.1zM841.4 696.9h26.1v4.2h-26.1zM865.2 698.6h25.7v4.3h-25.7zM887.5 700.4h27.2v4.3h-27.2zM910 702.1h30v4.4h-30zM934 704.1h34.5v4.5h-34.5zM961.1 706.1h33v4.5h-33zM985.3 708h37.6v4.6h-37.6zM1012.6 710.1h18.6v4.7h-18.6zM158.8 658.7h17v2h-17zM180 660.5h19.2v2h-19.2zM205 662.4h18.2v2.1h-18.2zM227.9 664.2h17.9v2.1h-17.9zM251.4 666h24.3v2.2h-24.3zM276.3 668h22.9v2.3h-22.9zM302.6 669.9h19.9v2.3h-19.9zM326 671.8h25.8v2.4h-25.8zM351.8 673.7h24.7v2.5h-24.7zM376.7 675.6h21.8v2.5h-21.8zM400.2 677.4h23.8v2.6h-23.8zM424 679.2h25.1v2.7h-25.1zM449.1 681.1h24v2.8h-24zM473.1 682.9h22.9v2.8h-22.9zM496 684.7h23.4v2.9h-23.4zM519.4 686.5h23.9v3h-23.9zM543.3 688.3h23.6v3.1h-23.6zM566.9 690.1h23.1v3.2h-23.1zM590 691.8h23.7v3.3h-23.7zM613.7 693.8h27.1v3.4h-27.1zM640.8 695.8h26.3v3.5h-26.3zM667 697.8h27.2v3.6h-27.2zM694.2 699.9h25.9v3.7h-25.9zM720.1 701.9h27.5v3.8h-27.5zM747.6 703.9h24.8v3.9h-24.8zM772.4 705.7h22.8v4h-22.8zM795.2 707.4h22.2v4.1h-22.2zM817.3 709.3h28.1v4.1h-28.1zM844.4 711.3h29.4v4.2h-29.4zM871.3 713.4h30.7v4.3h-30.7zM898.1 715.3h29.3v4.4h-29.3zM922.1 717.1h28.7v4.4h-28.7zM944.2 718.9h33.3v4.5h-33.3zM969.6 720.9h34.7v4.6h-34.7zM995 722.7h33.2v4.6h-33.2zM1017.6 724.6h13.6v4.7h-13.6zM158.8 672.4h8v2h-8zM174.2 674.1h16.5v2h-16.5zM197.1 676h21.8v2.1h-21.8zM222.4 677.9h21.7v2.1h-21.7zM246.1 679.6h17.2v2.2h-17.2zM268.4 681.4h20.6v2.2h-20.6zM292.5 683.3h26.2v2.3h-26.2zM318.7 685.3h22v2.4h-22zM342.8 687.2h25.3v2.4h-25.3zM368.1 689h22.5v2.5h-22.5zM390.6 690.8h25.3v2.6h-25.3zM416.5 692.8h24.2v2.7h-24.2zM440.7 694.7h26.7v2.7h-26.7zM467.4 696.7h24.5v2.8h-24.5zM491.9 698.7h28v2.9h-28zM519.9 700.6h22.4v3h-22.4zM542.3 702.3h22.1v3.1h-22.1zM564.5 704.2h27.1v3.2h-27.1zM591.6 706.2h27.6v3.3h-27.6zM619.2 708.3h26.3v3.4h-26.3zM645.5 710.3h25.9v3.5h-25.9zM671.4 712.1h22.4v3.6h-22.4zM693.7 713.9h24.8v3.7h-24.8zM718.5 715.8h26.1v3.8h-26.1zM744.6 717.9h27.1v3.9h-27.1zM771.7 719.9h25.7v4h-25.7zM797.4 721.8h25.1v4.1h-25.1zM822.5 723.7h24.8v4.2h-24.8zM846.1 725.4h25.4v4.2h-25.4zM869.1 727.2h25.9v4.3h-25.9zM891.3 729h31.7v4.4h-31.7zM918 731h29.6v4.4h-29.6zM941.2 732.8h33.9v4.5h-33.9zM967.3 734.8h34.4v4.6h-34.4zM992.5 736.8h37.5v4.6h-37.5zM1019.4 738.8h11.8v4.7h-11.8zM162.5 687.4h19.9v2h-19.9zM187 689.3h17.6v2.1h-17.6zM211.6 691.1h20.8v2.1h-20.8zM234.7 693h22.6v2.2h-22.6zM261.2 695h20.2v2.2h-20.2zM286.6 696.9h22.9v2.3h-22.9zM309.5 698.8h25.8v2.3h-25.8zM335.3 700.7h24.6v2.4h-24.6zM361.1 702.6h22.8v2.5h-22.8zM383.9 704.4h25.1v2.6h-25.1zM408.9 706.3h25.6v2.6h-25.6zM434.5 708.3h24.7v2.7h-24.7zM459.2 710.1h22.9v2.8h-22.9zM482.1 712h26.2v2.9h-26.2zM508.3 713.8h22.3v3h-22.3zM530.6 715.5h22.5v3h-22.5zM553.1 717.3h24.9v3.1h-24.9zM578.1 719.3h27.3v3.2h-27.3zM605.3 721.2h22.9v3.3h-22.9zM628.2 723h25v3.4h-25zM653.2 725.1h28v3.5h-28zM681.2 727h23v3.6h-23zM704.2 728.8h24.9v3.7h-24.9zM729.1 730.7h24.1v3.8h-24.1zM753.2 732.4h22.2v3.9h-22.2zM775.4 734.2h23.5v4h-23.5zM798.9 736h24v4.1h-24zM822.9 737.8h25.4v4.2h-25.4zM847.1 739.8h30.6v4.2h-30.6zM875.1 741.8h26.4v4.3h-26.4zM897.4 743.6h31.5v4.4h-31.5zM923.6 745.6h32v4.4h-32zM948.8 747.4h30.9v4.5h-30.9zM971.5 749.2h34.5v4.6h-34.5zM996.6 751.2h34.6v4.6h-34.6zM1023.1 753.2h8.1v4.7h-8.1zM164.6 701.6h15.2v2h-15.2zM186.7 703.3h16.6v2.1h-16.6zM209.3 705.1h20.6v2.1h-20.6zM234.1 707h21.9v2.2h-21.9zM258 708.8h17.5v2.2h-17.5zM280.1 710.6h24.3v2.3h-24.3zM305.7 712.6h26.3v2.3h-26.3zM332 714.7h24.8v2.4h-24.8zM359.9 716.8h26.7v2.5h-26.7zM386.6 718.7h25.1v2.6h-25.1zM411.7 720.6h24.7v2.6h-24.7zM436.4 722.6h25.5v2.7h-25.5zM461.9 724.5h25.3v2.8h-25.3zM487.2 726.5h27.5v2.9h-27.5zM514.7 728.6h27.7v3h-27.7zM542.4 730.5h22.1v3.1h-22.1zM564.6 732.4h27.1v3.2h-27.1zM591.6 734.3h22.2v3.3h-22.2zM613.8 736.1h26.2v3.4h-26.2zM640.1 738h23.8v3.5h-23.8zM663.9 739.9h24.4v3.5h-24.4zM688.4 741.7h23.8v3.6h-23.8zM712.1 743.6h26.2v3.7h-26.2zM738.4 745.6h25.9v3.8h-25.9zM764.3 747.6h26.2v4h-26.2zM790.4 749.5h24.3v4.1h-24.3zM814.7 751.3h25v4.1h-25zM838.9 753.3h29.8v4.2h-29.8zM866.6 755.4h29.4v4.3h-29.4zM892.3 757.2h27.1v4.3h-27.1zM914.4 758.9h29v4.4h-29zM937.2 760.7h31.1v4.5h-31.1zM960.9 762.6h35.5v4.5h-35.5zM987.5 764.7h37.8v4.6h-37.8zM1014.9 766.7h16.3v4.7h-16.3zM158.8 714.8h8.5v2h-8.5zM175.3 716.5h15.2v2h-15.2zM197.4 718.3h16v2.1h-16zM221.1 720.2h17.3v2.1h-17.3zM245.6 722.2h22.6v2.2h-22.6zM273.1 724.1h19.4v2.2h-19.4zM296.9 725.9h21.6v2.3h-21.6zM320.7 727.7h22.9v2.4h-22.9zM343.6 729.5h21.8v2.4h-21.8zM367.5 731.3h22.9v2.5h-22.9zM390.4 733.1h23.6v2.6h-23.6zM414 734.9h22.7v2.7h-22.7zM436.7 736.6h23.8v2.7h-23.8zM460.5 738.6h27.7v2.8h-27.7zM488.2 740.7h26v2.9h-26zM514.2 742.6h25.2v3h-25.2zM539.4 744.6h27.4v3.1h-27.4zM566.8 746.6h23.8v3.2h-23.8zM590.6 748.5h27v3.3h-27zM617.6 750.4h22.8v3.4h-22.8zM640.5 752.3h27.7v3.5h-27.7zM668.2 754.3h23v3.6h-23zM691.2 756.2h27.5v3.7h-27.5zM718.8 758.1h23v3.8h-23zM741.7 760h26.7v3.9h-26.7zM768.5 761.9h24.8v4h-24.8zM793.3 763.8h23.2v4.1h-23.2zM816.6 765.6h26.5v4.1h-26.5zM842.1 767.6h28.6v4.2h-28.6zM868.4 769.5h26.5v4.3h-26.5zM891.2 771.3h30.5v4.3h-30.5zM916.7 773.3h32.7v4.4h-32.7zM942.9 775.4h35.1v4.5h-35.1zM970.1 777.3h31.6v4.6h-31.6zM992.4 779.1h34.8v4.6h-34.8zM1016.7 781h14.5v4.7h-14.5zM158.8 728.3h4.4v2h-4.4zM167.5 730.1h20v2h-20zM191.3 732h19.5v2.1h-19.5zM215.8 733.9h21.1v2.1h-21.1zM241.7 735.9h23.6v2.2h-23.6zM267.7 737.8h22.4v2.2h-22.4zM291 739.7h24.2v2.3h-24.2zM316.8 741.6h23v2.4h-23zM341.6 743.5h23.5v2.4h-23.5zM365.1 745.3h23.3v2.5h-23.3zM388.5 747.1h24.6v2.6h-24.6zM413.1 749h23.9v2.7h-23.9zM436.9 750.9h27.7v2.7h-27.7zM464.6 752.8h22.3v2.8h-22.3zM486.9 754.7h27.4v2.9h-27.4zM514.2 756.6h22.5v3h-22.5zM536.7 758.4h23.1v3.1h-23.1zM559.8 760.3h26.8v3.2h-26.8zM586.6 762.3h27v3.3h-27zM613.6 764.3h24.3v3.4h-24.3zM637.9 766.2h25.6v3.4h-25.6zM663.5 768.1h26.2v3.5h-26.2zM689.8 770.2h27.2v3.7h-27.2zM717 772.1h23.8v3.8h-23.8zM740.8 773.9h23.1v3.8h-23.1zM763.8 775.6h22.6v3.9h-22.6zM786.5 777.4h24.6v4h-24.6zM811 779.3h25.4v4.1h-25.4zM835.9 781.1h24.6v4.2h-24.6zM858.6 782.9h27.7v4.3h-27.7zM883.1 784.9h30.7v4.3h-30.7zM909.2 786.9h33.6v4.4h-33.6zM936.7 789h35.6v4.5h-35.6zM964.7 791.2h36.8v4.6h-36.8zM992.4 793.2h34.8v4.6h-34.8zM1016.7 795.1h14.5v4.7h-14.5zM158.8 742.8h9.2v2h-9.2zM172.9 744.7h20.9v2h-20.9zM198.1 746.7h22.9v2.1h-22.9zM223.8 748.6h19.7v2.1h-19.7zM247.7 750.4h18.9v2.2h-18.9zM270.4 752.1h22.3v2.2h-22.3zM293.3 754h25.3v2.3h-25.3zM319.1 756h23.8v2.4h-23.8zM344.6 757.9h24.3v2.4h-24.3zM368.9 759.7h23.7v2.5h-23.7zM392.6 761.5h23.9v2.6h-23.9zM416.5 763.4h24.2v2.7h-24.2zM440.7 765.3h26.9v2.7h-26.9zM467.6 767.3h26.7v2.8h-26.7zM494.3 769.3h23.4v2.9h-23.4zM517.7 771.2h26.5v3h-26.5zM544.2 773.2h26.7v3.1h-26.7zM570.9 775.2h25.5v3.2h-25.5zM596.4 777h23v3.3h-23zM619.4 778.9h25.9v3.4h-25.9zM645.3 780.7h22.2v3.5h-22.2zM667.5 782.5h25v3.6h-25zM692.5 784.4h24.9v3.7h-24.9zM717.3 786.3h24.3v3.8h-24.3zM741.6 788.2h27v3.9h-27zM768.6 790.1h23v4h-23zM791.7 792h25.3v4.1h-25.3zM816.9 793.8h23.8v4.1h-23.8zM839.9 795.6h25.7v4.2h-25.7zM863.5 797.4h28v4.3h-28zM888 799.3h30.3v4.3h-30.3zM913.5 801.3h31.7v4.4h-31.7zM938.9 803.1h30.4v4.5h-30.4zM961.8 805h35.6v4.5h-35.6zM988.4 807.1h38v4.6h-38zM1016.1 809.2h15.1v4.7h-15.1zM161.2 758h22.4v2h-22.4zM187.4 760h22.2v2.1h-22.2zM214.7 762.1h23.4v2.1h-23.4zM241.3 764.1h20v2.2h-20zM267.8 766h18.4v2.2h-18.4zM290.9 768h23.3v2.3h-23.3zM317.6 769.9h19.9v2.4h-19.9zM340.8 771.7h23.6v2.4h-23.6zM365.6 773.6h25v2.5h-25zM390.6 775.6h27v2.6h-27zM417.6 777.5h23.1v2.7h-23.1zM440.7 779.2h22.3v2.7h-22.3zM463 781.1h26.6v2.8h-26.6zM489.6 783.2h27.7v2.9h-27.7zM517.3 785.3h27.6v3h-27.6zM544.9 787.4h27.8v3.1h-27.8zM572.7 789.5h26.3v3.2h-26.3zM599 791.3h22.9v3.3h-22.9zM621.9 793.2h26.9v3.4h-26.9zM648.8 795.2h25.1v3.5h-25.1zM673.8 797.1h24.6v3.6h-24.6zM698.4 799h24.5v3.7h-24.5zM722.8 800.8h24.4v3.8h-24.4zM747.2 802.7h24.9v3.9h-24.9zM772.1 804.7h27.6v4h-27.6zM799.7 806.8h27.1v4.1h-27.1zM826.8 808.7h25.7v4.2h-25.7zM851.1 810.7h29.6v4.2h-29.6zM877.9 812.7h30.9v4.3h-30.9zM904.5 814.7h30.4v4.4h-30.4zM929.3 816.5h29.4v4.5h-29.4zM951.6 818.3h34.2v4.5h-34.2zM977.4 820.3h34.6v4.6h-34.6zM1002.3 822.3h28.9v4.7h-28.9zM1029.8 824.3h1.4v4.7h-1.4zM158.8 770.7h5.9v2h-5.9zM169 772.5h19.2v2h-19.2zM191.2 774.3h17.8v2.1h-17.8zM213.9 776.2h24.8v2.1h-24.8zM241.6 778.3h23.2v2.2h-23.2zM268.6 780.3h21.4v2.2h-21.4zM294.4 782.3h23.1v2.3h-23.1zM319.4 784.2h24.1v2.4h-24.1zM343.5 785.9h22.3v2.4h-22.3zM365.8 787.7h23.1v2.5h-23.1zM389 789.5h23.8v2.6h-23.8zM412.7 791.4h27v2.7h-27zM439.8 793.3h22.5v2.7h-22.5zM462.3 795h22.1v2.8h-22.1zM484.4 796.8h25.1v2.9h-25.1zM509.5 798.6h22.3v3h-22.3zM531.8 800.5h26.5v3.1h-26.5zM558.3 802.4h23.5v3.1h-23.5zM581.8 804.2h24.4v3.2h-24.4zM606.2 806.2h27.3v3.3h-27.3zM633.6 808.1h23.2v3.4h-23.2zM656.8 809.9h23.8v3.5h-23.8zM680.5 811.7h22.7v3.6h-22.7zM703.2 813.5h25.7v3.7h-25.7zM728.9 815.5h26.9v3.8h-26.9zM755.8 817.4h24.1v3.9h-24.1zM779.9 819.3h25.2v4h-25.2zM805.1 821.1h22.8v4.1h-22.8zM827.6 822.8h23.6v4.2h-23.6zM849.9 824.5h25.3v4.2h-25.3zM872.5 826.5h31.2v4.3h-31.2zM899.7 828.6h33.2v4.4h-33.2zM927.4 830.6h32.9v4.4h-32.9zM953.2 832.5h32.3v4.5h-32.3zM977.2 834.3h31.8v4.6h-31.8zM999.3 836.1h31.9v4.6h-31.9zM1024 838.1h7.2v4.7h-7.2zM158.8 784.7h3.6v2h-3.6zM167.4 786.7h23.9v2h-23.9zM194.9 788.7h21.3v2.1h-21.3zM219.1 790.6h23.4v2.1h-23.4zM244.7 792.6h22.8v2.2h-22.8zM270.6 794.7h26.7v2.2h-26.7zM298.1 796.7h23.1v2.3h-23.1zM324.3 798.6h21.3v2.4h-21.3zM347.2 800.4h23.3v2.5h-23.3zM370.7 802.2h21.6v2.5h-21.6zM393.4 804h26.4v2.6h-26.4zM419.9 805.9h23.6v2.7h-23.6zM443.4 807.9h27.8v2.8h-27.8zM471.2 809.8h22.8v2.8h-22.8zM494 811.6h24.7v2.9h-24.7zM518.7 813.5h23.6v3h-23.6zM542.3 815.3h25.3v3.1h-25.3zM567.6 817.3h25.6v3.2h-25.6zM593.2 819.1h23.1v3.3h-23.1zM616.3 821h24.8v3.4h-24.8zM641.2 822.8h23.9v3.5h-23.9zM665.1 824.6h22.6v3.5h-22.6zM687.7 826.5h26.8v3.6h-26.8zM714.5 828.4h24.5v3.7h-24.5zM739 830.2h22.7v3.8h-22.7zM761.6 832.1h26v3.9h-26zM787.6 834h24.1v4h-24.1zM811.8 835.8h23.5v4.1h-23.5zM834.7 837.6h27.9v4.2h-27.9zM860.7 839.7h30.3v4.3h-30.3zM887.6 841.6h28.5v4.3h-28.5zM911.3 843.5h33.2v4.4h-33.2zM938.4 845.6h34.7v4.5h-34.7zM965.5 847.5h31.7v4.6h-31.7zM988.2 849.4h37.7v4.6h-37.7zM1015.5 851.4h15.7v4.7h-15.7zM158.8 799.8h15v2h-15zM181.4 801.8h17.5v2h-17.5zM204.9 803.6h18.8v2.1h-18.8zM230.1 805.6h22v2.1h-22zM255.4 807.5h20.4v2.2h-20.4zM279.1 809.4h21.1v2.3h-21.1zM305.2 811.3h18.7v2.3h-18.7zM327.9 813.1h26v2.4h-26zM353.9 815.1h26.9v2.5h-26.9zM380.8 817.1h24.3v2.6h-24.3zM405 818.9h22.2v2.6h-22.2zM427.2 820.7h24.5v2.7h-24.5zM451.7 822.5h24.7v2.8h-24.7zM476.4 824.5h27.5v2.9h-27.5zM503.9 826.4h22.6v3h-22.6zM526.5 828.2h22.5v3h-22.5zM549 829.9h22.1v3.1h-22.1zM571 831.7h27.2v3.2h-27.2zM598.2 833.7h24.4v3.3h-24.4zM622.6 835.6h25.2v3.4h-25.2zM647.8 837.5h26.4v3.5h-26.4zM674.2 839.5h24.1v3.6h-24.1zM698.3 841.3h23v3.7h-23zM721.3 843h22.3v3.8h-22.3zM743.6 844.7h23.8v3.9h-23.8zM767.4 846.6h25.7v4h-25.7zM793.1 848.6h27.3v4.1h-27.3zM820.5 850.6h25.6v4.2h-25.6zM844.9 852.6h29.9v4.2h-29.9zM872.3 854.6h28.4v4.3h-28.4zM896.8 856.4h27.5v4.4h-27.5zM919.1 858.2h30.9v4.4h-30.9zM943.4 859.9h30.3v4.5h-30.3zM965.9 861.8h35.2v4.6h-35.2zM992 863.8h36v4.6h-36zM1017.4 865.6h13.8v4.7h-13.8zM158.8 813.4h8.6v2h-8.6zM172.1 815.1h14.5v2h-14.5zM194.5 817.1h19.5v2.1h-19.5zM221.9 819.1h21.4v2.1h-21.4zM247.7 821.1h23.6v2.2h-23.6zM274.4 823h18.4v2.2h-18.4zM297.6 824.9h23.6v2.3h-23.6zM322.8 826.8h24.5v2.4h-24.5zM347.3 828.6h22.3v2.4h-22.3zM369.6 830.4h25.9v2.5h-25.9zM395.5 832.4h24.5v2.6h-24.5zM420 834.2h25.1v2.7h-25.1zM445.1 836.2h27.1v2.8h-27.1zM472.2 838.3h27.6v2.9h-27.6zM499.8 840.3h24.6v2.9h-24.6zM524.4 842.1h22.3v3h-22.3zM546.8 844h26.2v3.1h-26.2zM573 846h27.5v3.2h-27.5zM600.5 848h23.6v3.3h-23.6zM624.1 849.9h26.4v3.4h-26.4zM650.5 851.8h25.2v3.5h-25.2zM675.7 853.7h25.1v3.6h-25.1zM700.7 855.7h27.7v3.7h-27.7zM728.4 857.7h23.5v3.8h-23.5zM751.9 859.5h24.7v3.9h-24.7zM776.7 861.5h26.3v4h-26.3zM803 863.5h26.5v4.1h-26.5zM829.3 865.3h23.7v4.2h-23.7zM851.5 867.1h28.5v4.2h-28.5zM877.2 869.2h31.3v4.3h-31.3zM904.2 871.2h32v4.4h-32zM930.5 873.3h34.7v4.5h-34.7zM957.9 875.2h31.5v4.5h-31.5zM980.8 877.1h37.3v4.6h-37.3zM1008.1 879.2h23.1v4.7h-23.1zM158.8 827.6h11.6v2h-11.6zM175.3 829.6h18.5v2h-18.5zM200.4 831.5h17.2v2.1h-17.2zM224.6 833.4h18.6v2.1h-18.6zM249.1 835.3h22.1v2.2h-22.1zM274 837.2h24.6v2.3h-24.6zM299.4 839.2h27.4v2.3h-27.4zM326.8 841.2h21.7v2.4h-21.7zM350.1 843.1h23.7v2.5h-23.7zM376.1 844.9h23.3v2.5h-23.3zM399.4 846.7h23.6v2.6h-23.6zM423.1 848.5h22.7v2.7h-22.7zM445.8 850.3h24.5v2.8h-24.5zM470.3 852.2h24.7v2.8h-24.7zM495 854.1h26.5v2.9h-26.5zM521.5 856.2h27.8v3h-27.8zM549.3 858.2h23.3v3.1h-23.3zM572.5 860.1h27.9v3.2h-27.9zM600.4 862.1h25.5v3.3h-25.5zM625.9 864.1h25.1v3.4h-25.1zM651 866h26.3v3.5h-26.3zM677.4 868.1h28v3.6h-28zM705.3 870.1h25.3v3.7h-25.3zM730.6 872h25.2v3.8h-25.2zM755.9 874h26v3.9h-26zM781.9 875.9h25.5v4h-25.5zM807.4 877.7h22.3v4.1h-22.3zM829.4 879.5h24.3v4.2h-24.3zM852.2 881.3h27.4v4.2h-27.4zM876.8 883.3h31.5v4.3h-31.5zM904 885.2h28.8v4.4h-28.8zM927.1 886.9h29.5v4.4h-29.5zM949.7 888.8h33.9v4.5h-33.9zM975.5 890.8h35.2v4.6h-35.2zM1001 892.7h30.2v4.7h-30.2zM1026.8 894.7h4.4v4.7h-4.4zM158.8 841.9h10v2h-10zM178.5 844h19.2v2h-19.2zM204.5 845.9h17.4v2.1h-17.4zM226.8 847.6h16.9v2.1h-16.9zM250 849.6h21.9v2.2h-21.9zM277.6 851.6h23.1v2.3h-23.1zM302.2 853.4h20.7v2.3h-20.7zM325.4 855.2h22.1v2.4h-22.1zM349.6 857.1h24.9v2.5h-24.9zM374.5 858.9h22.5v2.5h-22.5zM397.1 860.8h27v2.6h-27zM424.7 862.8h24.5v2.7h-24.5zM449.2 864.8h27.1v2.8h-27.1zM476.2 866.8h25.5v2.9h-25.5zM501.8 868.8h26.9v3h-26.9zM528.7 870.7h24.2v3h-24.2zM552.8 872.6h24.4v3.1h-24.4zM577.3 874.4h23.4v3.2h-23.4zM600.7 876.2h22.6v3.3h-22.6zM623.3 877.9h22.9v3.4h-22.9zM646.2 879.7h24.5v3.5h-24.5zM670.8 881.6h25.4v3.6h-25.4zM696.2 883.5h23.4v3.7h-23.4zM719.6 885.3h24.4v3.8h-24.4zM744 887.2h25v3.9h-25zM769.1 889.1h26.1v4h-26.1zM795.2 890.9h22.5v4.1h-22.5zM817.7 892.7h23.4v4.1h-23.4zM840.2 894.6h29.9v4.2h-29.9zM867.8 896.6h27.2v4.3h-27.2zM891.4 898.5h32.7v4.4h-32.7zM919 900.6h32v4.4h-32zM944.5 902.6h34.7v4.5h-34.7zM971.3 904.5h32.7v4.6h-32.7zM994.6 906.3h36v4.6h-36zM1020 908.3h11.2v4.7h-11.2zM158.8 856.2h16.9v2h-16.9zM180.7 858.3h16.6v2h-16.6zM205.7 860.2h17v2.1h-17zM230.7 862h17.7v2.1h-17.7zM254.2 863.9h19.4v2.2h-19.4zM279.6 865.9h20v2.3h-20zM304.4 867.8h23.1v2.3h-23.1zM331.8 869.9h26.9v2.4h-26.9zM358.6 871.9h25.4v2.5h-25.4zM384 873.8h22.8v2.6h-22.8zM406.8 875.6h23.9v2.6h-23.9zM430.7 877.5h26.4v2.7h-26.4zM457.1 879.5h26.8v2.8h-26.8zM483.9 881.5h25.2v2.9h-25.2zM509.1 883.3h23.1v3h-23.1zM532.2 885.2h25v3.1h-25zM557.2 887.2h27.5v3.2h-27.5zM584.6 889.1h23.1v3.2h-23.1zM607.7 890.9h25.2v3.3h-25.2zM632.9 892.7h22.3v3.4h-22.3zM655.2 894.6h27.8v3.5h-27.8zM682.9 896.6h24.8v3.6h-24.8zM707.8 898.6h26.6v3.7h-26.6zM734.4 900.5h23.8v3.8h-23.8zM758.1 902.3h24v3.9h-24zM782.1 904.1h22.5v4h-22.5zM804.6 906h27.3v4.1h-27.3zM831.7 908.1h29.3v4.2h-29.3zM859.2 910.2h31.3v4.3h-31.3zM887.2 912.3h31.9v4.3h-31.9zM914.3 914.2h30.1v4.4h-30.1zM938.2 916.2h33.8v4.5h-33.8zM964.3 918h31.3v4.5h-31.3zM986.7 919.7h32.4v4.6h-32.4zM1009 921.6h22.2v4.7h-22.2zM158.8 870.3h15.6v2h-15.6zM179 872.2h18.3v2h-18.3zM202.3 874.1h24.3v2.1h-24.3zM229.8 876.2h18.7v2.1h-18.7zM255.2 878.1h20.6v2.2h-20.6zM281 880h18.5v2.3h-18.5zM304.4 882h26v2.3h-26zM332 883.9h23v2.4h-23zM355 885.7h22.5v2.5h-22.5zM379.9 887.6h24.2v2.5h-24.2zM404 889.6h26.4v2.6h-26.4zM430.5 891.6h27v2.7h-27zM457.5 893.7h27.2v2.8h-27.2zM484.7 895.7h25.7v2.9h-25.7zM510.4 897.6h24.6v3h-24.6zM535 899.6h27.4v3.1h-27.4zM562.3 901.7h27.2v3.2h-27.2zM589.6 903.7h26v3.3h-26zM615.6 905.7h27v3.4h-27zM642.6 907.8h27.5v3.5h-27.5zM670 909.9h27.7v3.6h-27.7zM697.8 911.9h26.3v3.7h-26.3zM724.1 913.9h25.4v3.8h-25.4zM749.5 915.9h27.1v3.9h-27.1zM776.7 917.9h25.6v4h-25.6zM802.3 919.9h26.2v4.1h-26.2zM828.3 921.8h26.1v4.2h-26.1zM852.8 923.7h27.1v4.2h-27.1zM877.1 925.5h28.3v4.3h-28.3zM901.2 927.5h32.6v4.4h-32.6zM928.2 929.4h29.5v4.4h-29.5zM950.8 931.2h32.5v4.5h-32.5zM975.1 933h32v4.6h-32zM997.6 934.7h33.6v4.6h-33.6zM1021.5 936.6h9.7v4.7h-9.7zM158.8 884.2h12.5v2h-12.5zM176.1 886.1h18.8v2h-18.8zM200.8 888h21v2.1h-21zM225.1 889.8h22.1v2.1h-22.1zM248.5 891.8h22.2v2.2h-22.2zM274.7 893.8h27.8v2.3h-27.8zM302.5 895.9h22.6v2.3h-22.6zM328.6 897.8h20.7v2.4h-20.7zM351.1 899.5h21.9v2.5h-21.9zM373.4 901.3h26.9v2.5h-26.9zM400.3 903.2h22.8v2.6h-22.8zM423.1 905.1h24.5v2.7h-24.5zM447.6 907h26.5v2.8h-26.5zM474.1 909h26.6v2.9h-26.6zM500.7 911.1h27.1v2.9h-27.1zM527.8 913.1h26v3h-26zM553.8 915h22.6v3.1h-22.6zM576.4 916.7h23.9v3.2h-23.9zM600.2 918.6h26.5v3.3h-26.5zM626.7 920.5h23v3.4h-23zM649.7 922.4h26.4v3.5h-26.4zM676.1 924.2h22.1v3.6h-22.1zM698.2 925.9h22.6v3.7h-22.6zM720.8 927.8h26.6v3.8h-26.6zM747.3 929.8h26.4v3.9h-26.4zM773.8 931.7h23.7v4h-23.7zM797.4 933.5h23.8v4.1h-23.8zM821.3 935.3h24.1v4.2h-24.1zM844.3 937.2h28.6v4.2h-28.6zM870.5 939.1h26.9v4.3h-26.9zM893.6 941h30.7v4.4h-30.7zM919.1 942.9h30.9v4.4h-30.9zM943.5 944.8h34v4.5h-34zM969.6 946.7h31.6v4.6h-31.6zM991.9 948.6h38v4.6h-38zM1019.3 950.5h11.9v4.7h-11.9zM158.8 898.6h14.5v2h-14.5zM180.4 900.5h19v2h-19zM203.6 902.3h21.6v2.1h-21.6zM227.7 904.3h24.4v2.1h-24.4zM253.7 906.1h21.6v2.2h-21.6zM276.5 907.9h19.7v2.3h-19.7zM300.4 909.8h25.4v2.3h-25.4zM325.9 911.8h25.1v2.4h-25.1zM353.1 913.9h26v2.5h-26zM379.1 915.8h23.2v2.5h-23.2zM402.3 917.5h22.5v2.6h-22.5zM424.8 919.4h26.1v2.7h-26.1zM450.9 921.4h27.8v2.8h-27.8zM478.7 923.5h27.2v2.9h-27.2zM505.9 925.4h23.3v3h-23.3zM529.2 927.4h27.7v3.1h-27.7zM556.9 929.5h26.5v3.1h-26.5zM583.4 931.5h27.8v3.2h-27.8zM611.2 933.6h25.8v3.3h-25.8zM636.9 935.6h27.6v3.4h-27.6zM664.5 937.5h23.5v3.5h-23.5zM688 939.4h26.1v3.6h-26.1zM714 941.4h27v3.8h-27zM741 943.4h24v3.9h-24zM765 945.3h27.4v4h-27.4zM792.4 947.3h25.2v4.1h-25.2zM817.6 949.3h27.1v4.1h-27.1zM843.7 951.3h29.4v4.2h-29.4zM870.7 953.4h30.3v4.3h-30.3zM897.2 955.4h33.4v4.4h-33.4zM925.1 957.6h34.1v4.4h-34.1zM952.3 959.5h32.6v4.5h-32.6zM976.5 961.3h31.7v4.6h-31.7zM998.6 963.2h32.6v4.6h-32.6zM1026.2 965.2h5v4.7h-5zM158.8 911.9h5.3v2h-5.3zM169.5 913.8h17.1v2h-17.1zM193.3 915.7h16.9v2.1h-16.9zM217.1 917.5h21.3v2.1h-21.3zM242.2 919.6h23.1v2.2h-23.1zM270.1 921.5h18.3v2.2h-18.3zM292.4 923.3h24.8v2.3h-24.8zM317.2 925.2h23.3v2.4h-23.3zM342.3 927.2h24v2.4h-24zM368.4 929.2h27.3v2.5h-27.3zM395.6 931.3h26v2.6h-26zM422.5 933.2h23.4v2.7h-23.4zM445.9 935.1h26.5v2.8h-26.5zM472.4 937.2h27.7v2.9h-27.7zM500.1 939.1h23.9v2.9h-23.9zM524 941h24.9v3h-24.9zM548.8 942.9h24.8v3.1h-24.8zM573.6 944.8h24.9v3.2h-24.9zM598.6 946.8h27.6v3.3h-27.6zM626.1 948.8h25.9v3.4h-25.9zM652.1 950.8h25.3v3.5h-25.3zM677.3 952.7h25.2v3.6h-25.2zM702.5 954.5h22.8v3.7h-22.8zM725.3 956.4h27.4v3.8h-27.4zM752.7 958.4h24.5v3.9h-24.5zM777.2 960.3h26.1v4h-26.1zM803.3 962.3h26.6v4.1h-26.6zM829.7 964.3h25.7v4.2h-25.7zM853.9 966.1h27.4v4.2h-27.4zM878.3 968h27.7v4.3h-27.7zM901.8 969.9h32.8v4.4h-32.8zM929 972h35.1v4.5h-35.1zM957 974h32.6v4.5h-32.6zM981.1 976h37v4.6h-37zM1008 977.9h23.2v4.7h-23.2zM167.3 927.9h21.4v2h-21.4zM194.2 929.8h18.2v2.1h-18.2zM216.4 931.6h23.2v2.1h-23.2zM241.5 933.6h20.2v2.2h-20.2zM267.4 935.4h19.7v2.2h-19.7zM289.6 937.2h24.3v2.3h-24.3zM315.3 939.2h21.5v2.4h-21.5zM339.9 941h24.3v2.4h-24.3zM364.2 942.9h24.2v2.5h-24.2zM389 944.9h27.6v2.6h-27.6zM416.7 947h27.3v2.7h-27.3zM444 949.1h27.1v2.8h-27.1zM471.1 951.2h27.2v2.8h-27.2zM498.3 953.2h25.5v2.9h-25.5zM523.8 955h22.3v3h-22.3zM546.1 956.8h25.4v3.1h-25.4zM571.5 958.9h27.9v3.2h-27.9zM599.4 960.9h24.6v3.3h-24.6zM624 962.8h26v3.4h-26zM650 964.8h27.1v3.5h-27.1zM677.1 966.8h26.2v3.6h-26.2zM703.3 968.9h27.1v3.7h-27.1zM730.4 970.8h22.8v3.8h-22.8zM753.2 972.6h25.9v3.9h-25.9zM779.1 974.6h27v4h-27zM806.1 976.5h23.9v4.1h-23.9zM829.8 978.4h27.5v4.2h-27.5zM855.6 980.3h25v4.2h-25zM877.7 982h27.6v4.3h-27.6zM901.1 983.9h31.7v4.4h-31.7zM927.2 985.8h30v4.4h-30zM950.3 987.6h33.4v4.5h-33.4zM975.5 989.7h37v4.6h-37zM1002.8 991.6h28.4v4.7h-28.4zM1024.9 993.5h6.3v4.7h-6.3zM158.8 941.2h17.7v2h-17.7zM182.4 943h19.6v2h-19.6zM205.5 944.8h19.3v2.1h-19.3zM227.7 946.7h23.9v2.1h-23.9zM254.7 948.6h19.6v2.2h-19.6zM279.4 950.7h23.3v2.3h-23.3zM307.2 952.6h22.5v2.3h-22.5zM329.8 954.4h24.8v2.4h-24.8zM354.6 956.4h27.4v2.5h-27.4zM382 958.4h25.6v2.6h-25.6zM407.6 960.3h23.4v2.6h-23.4zM431 962.2h27.2v2.7h-27.2zM458.1 964.2h25.1v2.8h-25.1zM483.2 966.2h26.1v2.9h-26.1zM509.4 968.1h24.9v3h-24.9zM534.3 970.1h25.5v3.1h-25.5zM559.8 971.9h22.1v3.2h-22.1zM581.9 973.7h27.2v3.2h-27.2zM609.1 975.6h22.7v3.3h-22.7zM631.8 977.4h22.6v3.4h-22.6zM654.4 979.3h27.8v3.5h-27.8zM682.1 981.3h24.1v3.6h-24.1zM706.3 983.2h26.5v3.7h-26.5zM732.8 985.1h23v3.8h-23zM755.8 986.8h22.8v3.9h-22.8zM778.7 988.7h27.4v4h-27.4zM806.1 990.6h22.5v4.1h-22.5zM828.4 992.4h25.4v4.2h-25.4zM852.2 994.2h26v4.2h-26zM875.5 995.9h27v4.3h-27zM898.4 997.8h31v4.4h-31zM924 999.7h31.3v4.4h-31.3zM948.5 1001.5h30.2v4.5h-30.2zM970.7 1003.2h31.8v4.6h-31.8zM993.2 1005.1h38v4.6h-38zM1020.7 1007.2h10.5v4.7h-10.5zM158.8 954.8h10.6v2h-10.6zM175.4 956.7h19.3v2h-19.3zM199.9 958.5h19.8v2.1h-19.8zM224.3 960.4h21.2v2.1h-21.2zM247.3 962.1h16.8v2.2h-16.8zM270 963.9h21.9v2.2h-21.9zM293.4 965.8h26.3v2.3h-26.3zM320.9 967.8h20.9v2.4h-20.9zM345 969.8h27.7v2.4h-27.7zM372.7 971.8h25.3v2.5h-25.3zM398 973.8h25.3v2.6h-25.3zM423.3 975.8h27.6v2.7h-27.6zM450.9 977.8h24.3v2.8h-24.3zM475.2 979.7h27.2v2.9h-27.2zM502.4 981.7h24.1v3h-24.1zM526.5 983.5h22.4v3h-22.4zM548.9 985.3h25.9v3.1h-25.9zM574.8 987.3h26.4v3.2h-26.4zM601.2 989.2h23.7v3.3h-23.7zM624.9 991.1h26v3.4h-26zM650.9 993.1h26.5v3.5h-26.5zM677.4 995h22.9v3.6h-22.9zM700.3 996.9h27.5v3.7h-27.5zM727.9 998.9h25.5v3.8h-25.5zM753.4 1000.8h23.1v3.9h-23.1zM776.5 1002.7h27.8v4h-27.8zM804.3 1004.6h23.1v4.1h-23.1zM827.3 1006.4h24.5v4.2h-24.5zM850.4 1008.3h29.8v4.2h-29.8zM877.4 1010.2h26.7v4.3h-26.7zM899.9 1012.1h31.4v4.4h-31.4zM925.9 1014.1h34.9v4.4h-34.9zM953.8 1016.1h33.2v4.5h-33.2zM978.6 1018.1h35.1v4.6h-35.1zM1004 1019.9h27.2v4.7h-27.2zM1027.4 1021.8h3.8v4.7h-3.8zM158.8 968.5h3v2h-3zM169.3 970.4h24.3v2h-24.3zM197.2 972.4h18v2.1h-18zM219.2 974.2h21.2v2.1h-21.2zM245.7 976.3h20.5v2.2h-20.5zM272 978.2h22.3v2.2h-22.3zM295.2 979.9h19.9v2.3h-19.9zM318.6 981.7h20.8v2.4h-20.8zM340.8 983.6h24.4v2.4h-24.4zM368.8 985.7h25.5v2.5h-25.5zM394.5 987.5h22.1v2.6h-22.1zM416.6 989.3h25.1v2.7h-25.1zM441.7 991.3h27.3v2.8h-27.3zM469 993.3h26.3v2.8h-26.3zM495.4 995.4h27.8v2.9h-27.8zM523.2 997.4h23.5v3h-23.5zM546.7 999.3h27.7v3.1h-27.7zM574.4 1001.3h23.7v3.2h-23.7zM598.1 1003.2h25.4v3.3h-25.4zM623.5 1005.1h27v3.4h-27zM650.5 1007.1h25.6v3.5h-25.6zM676.1 1009.2h27.3v3.6h-27.3zM703.4 1011.1h24.2v3.7h-24.2zM727.6 1012.9h22.7v3.8h-22.7zM750.2 1014.8h26.6v3.9h-26.6zM776.8 1016.8h27v4h-27zM803.8 1018.8h25v4.1h-25zM828.6 1020.7h26v4.2h-26zM853.2 1022.6h28.7v4.2h-28.7zM878.9 1024.6h29.9v4.3h-29.9zM904.5 1026.6h32.5v4.4h-32.5zM931.2 1028.5h30.7v4.5h-30.7zM954.8 1030.3h32.4v4.5h-32.4zM978.7 1032.2h36v4.6h-36zM1004.9 1034.2h26.3v4.7h-26.3zM1029.4 1036.2h1.8v4.7h-1.8zM158.8 982.9h11.6v2h-11.6zM175.3 984.8h19v2h-19zM198.4 986.6h15v2.1h-15zM220.6 988.4h18.4v2.1h-18.4zM245.5 990.2h16.9v2.2h-16.9zM267.9 992.1h20.9v2.2h-20.9zM294.8 994h20.2v2.3h-20.2zM317.4 995.9h22v2.4h-22zM343.4 997.7h22.1v2.4h-22.1zM365.5 999.4h21.4v2.5h-21.4zM387.5 1001.1h23v2.6h-23zM410.5 1002.9h25.1v2.6h-25.1zM435.6 1004.9h25.3v2.7h-25.3zM460.9 1006.9h26.6v2.8h-26.6zM487.5 1008.9h28v2.9h-28zM515.4 1011.1h27.7v3h-27.7zM543.1 1013.1h25.5v3.1h-25.5zM568.7 1015.1h27.8v3.2h-27.8zM596.5 1017.2h27.2v3.3h-27.2zM623.6 1019.3h27.7v3.4h-27.7zM651.3 1021.4h26.5v3.5h-26.5zM677.8 1023.2h22.9v3.6h-22.9zM700.7 1025h24.3v3.7h-24.3zM724.9 1026.9h26.1v3.8h-26.1zM751 1028.9h24.4v3.9h-24.4zM775.4 1030.8h25.8v4h-25.8zM801.2 1032.8h27v4.1h-27zM828.1 1034.8h28.8v4.2h-28.8zM855.4 1036.8h26.7v4.2h-26.7zM879.1 1038.7h31.2v4.3h-31.2zM905.9 1040.7h29.3v4.4h-29.3zM929.4 1042.6h34.5v4.5h-34.5zM956.8 1044.6h32.8v4.5h-32.8zM981 1046.5h36.5v4.6h-36.5zM1007.5 1048.5h23.7v4.7h-23.7zM158.8 996.9h7v2h-7zM171.7 998.8h18.4v2h-18.4zM199.3 1000.8h16.6v2.1h-16.6zM222.6 1002.6h17.2v2.1h-17.2zM246.8 1004.4h19.1v2.2h-19.1zM269.3 1006.3h26.1v2.2h-26.1zM295.7 1008.3h24.5v2.3h-24.5zM321.1 1010.1h20.7v2.4h-20.7zM344.1 1012h23.3v2.4h-23.3zM369.4 1013.8h21v2.5h-21zM391.8 1015.6h24v2.6h-24zM415.8 1017.6h27.3v2.7h-27.3zM443.2 1019.5h23.6v2.7h-23.6zM466.7 1021.3h23.2v2.8h-23.2zM489.9 1023.1h23.7v2.9h-23.7zM513.6 1024.9h25.2v3h-25.2zM538.9 1026.9h25v3.1h-25zM563.9 1028.8h24.6v3.2h-24.6zM588.5 1030.6h24.4v3.3h-24.4zM612.9 1032.6h27.4v3.4h-27.4zM640.3 1034.7h27.1v3.5h-27.1zM667.4 1036.5h22.3v3.6h-22.3zM689.8 1038.4h25.9v3.7h-25.9zM715.7 1040.3h23.3v3.7h-23.3zM739 1042.1h24.5v3.8h-24.5zM763.5 1044h27.6v4h-27.6zM791 1045.9h22.5v4.1h-22.5zM813.5 1047.8h25.9v4.1h-25.9zM838.7 1049.7h27.1v4.2h-27.1zM863.7 1051.5h26.1v4.3h-26.1zM886.4 1053.2h26.9v4.3h-26.9zM908.6 1055h30.4v4.4h-30.4zM933.1 1057h34.4v4.5h-34.4zM960.2 1059h33.8v4.5h-33.8zM985.2 1061h37.9v4.6h-37.9zM1012.8 1063h18.4v4.7h-18.4zM166.2 1012.4h20.2v2h-20.2zM190.9 1014.2h19.4v2.1h-19.4zM213.1 1016.1h22.1v2.1h-22.1zM239.9 1018.1h17.8v2.2h-17.8zM263.6 1019.8h21.3v2.2h-21.3zM285.8 1021.5h20.2v2.3h-20.2zM308 1023.4h23.6v2.3h-23.6zM335.3 1025.4h21.4v2.4h-21.4zM359.9 1027.2h22.8v2.5h-22.8zM382.7 1029.1h25.5v2.6h-25.5zM408.2 1031h23.8v2.6h-23.8zM432.7 1032.9h25.5v2.7h-25.5zM458.3 1034.8h23.9v2.8h-23.9zM482.2 1036.8h27.6v2.9h-27.6zM509.7 1038.7h23.3v3h-23.3zM533.1 1040.4h22.4v3.1h-22.4zM555.5 1042.2h23.6v3.1h-23.6zM579 1044.1h27.4v3.2h-27.4zM606.4 1046.1h23.9v3.3h-23.9zM630.3 1047.9h23.8v3.4h-23.8zM654.1 1049.6h22.3v3.5h-22.3zM676.4 1051.5h26.1v3.6h-26.1zM702.4 1053.5h26.3v3.7h-26.3zM728.7 1055.5h27v3.8h-27zM755.7 1057.5h24.6v3.9h-24.6zM780.3 1059.4h27.2v4h-27.2zM807.5 1061.4h24.9v4.1h-24.9zM832.1 1063.4h29.5v4.2h-29.5zM859.7 1065.3h25.9v4.3h-25.9zM882.5 1067.3h32v4.3h-32zM909.9 1069.3h31.7v4.4h-31.7zM935.6 1071.3h35.3v4.5h-35.3zM158.8 1025.4h12.4v2h-12.4zM175.2 1027.3h22.2v2h-22.2zM201.5 1029.2h19.2v2.1h-19.2zM225.6 1031.1h17.7v2.1h-17.7zM250.1 1033.1h24.7v2.2h-24.7zM276 1035h24.1v2.3h-24.1zM301.1 1036.9h23.6v2.3h-23.6zM326.4 1038.9h23.4v2.4h-23.4zM352.2 1040.8h23.2v2.5h-23.2zM375.4 1042.6h23.9v2.5h-23.9zM399.3 1044.5h26v2.6h-26zM425.3 1046.5h27.3v2.7h-27.3zM452.6 1048.5h24.8v2.8h-24.8zM477.4 1050.3h22.4v2.9h-22.4zM499.7 1052h22.7v2.9h-22.7zM522.4 1053.8h24.1v3h-24.1zM546.5 1055.6h23.9v3.1h-23.9zM570.4 1057.4h22.8v3.2h-22.8zM593.2 1059.3h26.5v3.3h-26.5zM619.7 1061.3h26.8v3.4h-26.8zM646.5 1063.2h23.3v3.5h-23.3zM669.8 1065.1h25.4v3.6h-25.4zM695.2 1067h24.4v3.7h-24.4zM719.6 1068.8h24.1v3.8h-24.1zM743.7 1070.7h25v3.9h-25zM768.7 1072.6h25.8v4h-25.8zM158.8 1039.4h9.6v2h-9.6zM173.7 1041.3h18.1v2h-18.1zM200.9 1043.5h19.1v2.1h-19.1zM228.8 1045.5h21.5v2.1h-21.5zM253.3 1047.4h24v2.2h-24zM278 1049.3h24.4v2.3h-24.4zM303.2 1051.2h23.8v2.3h-23.8zM327 1053.1h25.4v2.4h-25.4zM354.5 1055.2h25.6v2.5h-25.6zM380.1 1057h22.4v2.5h-22.4zM403.8 1058.9h26v2.6h-26zM429.8 1060.8h22.7v2.7h-22.7zM452.5 1062.6h24.8v2.8h-24.8zM477.3 1064.6h27v2.9h-27zM504.3 1066.6h26v3h-26zM530.4 1068.7h27.4v3.1h-27.4zM557.7 1070.7h25.1v3.1h-25.1zM582.8 1072.6h25.2v3.2h-25.2zM158.8 1053.9h11.8v2h-11.8zM179.2 1055.8h17.8v2h-17.8zM204.9 1057.7h17.5v2.1h-17.5zM229 1059.6h16.4v2.1h-16.4zM252 1061.3h22.2v2.2h-22.2zM275.5 1063.1h18v2.3h-18zM298.1 1065h26v2.3h-26zM324.1 1066.9h20.9v2.4h-20.9zM348.4 1068.9h27.2v2.5h-27.2zM375.6 1070.9h24v2.5h-24zM400.4 1072.8h25.1v2.6h-25.1zM158.8 1067.9h12.1v2h-12.1zM176.9 1069.8h17.7v2h-17.7zM203 1071.7h16v2.1h-16z" fill="#000" shape-rendering="crispEdges"/></g>
<path d="M158 198h2v876h-2zM1030 198h2v876h-2zM158 198h874v2h-874zM158 1072h874v2h-874zM158 1074h2v10h-2zM148 198h10v2h-10zM265 1074h2v10h-2zM148 305h10v2h-10zM371 1074h2v10h-2zM148 411h10v2h-10zM477 1074h2v10h-2zM148 518h10v2h-10zM584 1074h2v10h-2zM148 625h10v2h-10zM690 1074h2v10h-2zM148 731h10v2h-10zM797 1074h2v10h-2zM148 838h10v2h-10zM903 1074h2v10h-2zM148 945h10v2h-10zM1010 1074h2v10h-2zM148 1052h10v2h-10z" shape-rendering="crispEdges"/>
<text class="tl" transform="translate(158.5 1112.3) scale(1.09 1)" text-anchor="middle">0</text>
<text class="tl" transform="translate(138.8 209.5) scale(1.09 1)" text-anchor="end">0</text>
<text class="tl" transform="translate(265 1112.3) scale(1.09 1)" text-anchor="middle">250</text>
<text class="tl" transform="translate(138.8 316.2) scale(1.09 1)" text-anchor="end">250</text>
<text class="tl" transform="translate(371.5 1112.3) scale(1.09 1)" text-anchor="middle">500</text>
<text class="tl" transform="translate(138.8 422.9) scale(1.09 1)" text-anchor="end">500</text>
<text class="tl" transform="translate(478 1112.3) scale(1.09 1)" text-anchor="middle">750</text>
<text class="tl" transform="translate(138.8 529.6) scale(1.09 1)" text-anchor="end">750</text>
<text class="tl" transform="translate(584.5 1112.3) scale(1.09 1)" text-anchor="middle">1000</text>
<text class="tl" transform="translate(138.8 636.3) scale(1.09 1)" text-anchor="end">1000</text>
<text class="tl" transform="translate(691 1112.3) scale(1.09 1)" text-anchor="middle">1250</text>
<text class="tl" transform="translate(138.8 743) scale(1.09 1)" text-anchor="end">1250</text>
<text class="tl" transform="translate(797.5 1112.3) scale(1.09 1)" text-anchor="middle">1500</text>
<text class="tl" transform="translate(138.8 849.7) scale(1.09 1)" text-anchor="end">1500</text>
<text class="tl" transform="translate(904 1112.3) scale(1.09 1)" text-anchor="middle">1750</text>
<text class="tl" transform="translate(138.8 956.3) scale(1.09 1)" text-anchor="end">1750</text>
<text class="tl" transform="translate(1010.5 1112.3) scale(1.09 1)" text-anchor="middle">2000</text>
<text class="tl" transform="translate(138.8 1063) scale(1.09 1)" text-anchor="end">2000</text>
<text class="tt" transform="translate(592.8 182) scale(1.128 1)" text-anchor="middle">ori image</text>
<rect x="1276.8" y="198.8" width="872.4" height="874" fill="#a6a6a6"/>
<rect x="1276.8" y="198.8" width="872.4" height="874" filter="url(#n0)"/>
<rect x="1276.8" y="198.8" width="872.4" height="874" filter="url(#sp)" mask="url(#mk)"/>
<g clip-path="url(#c1)"><g transform="translate(1276.8 198.8)"><g filter="url(#bl)"><ellipse cx="763" cy="113" rx="38" ry="42" opacity="0.2"/><ellipse cx="798" cy="156" rx="25" ry="14" opacity="0.12"/><ellipse cx="735" cy="70" rx="18" ry="26" opacity="0.05"/><ellipse cx="403" cy="621" rx="55" ry="35" opacity="0.17"/><ellipse cx="423" cy="631" rx="30" ry="20" opacity="0.12"/><ellipse cx="373" cy="591" rx="30" ry="25" opacity="0.06"/><ellipse cx="345" cy="615" rx="9" ry="9" opacity="0.25"/><ellipse cx="254" cy="166" rx="10" ry="10" opacity="0.08"/><ellipse cx="113" cy="511" rx="10" ry="8" opacity="0.08"/><ellipse cx="551" cy="290" rx="8" ry="8" opacity="0.08"/><ellipse cx="814" cy="469" rx="10" ry="10" opacity="0.08"/><ellipse cx="751" cy="573" rx="8" ry="8" opacity="0.08"/><ellipse cx="137" cy="822" rx="10" ry="8" opacity="0.08"/><ellipse cx="385" cy="107" rx="12" ry="6" opacity="0.12"/><ellipse cx="250" cy="700" rx="120" ry="140" opacity="0.035"/><ellipse cx="80" cy="760" rx="90" ry="90" opacity="0.03"/><ellipse cx="496" cy="316" rx="9" ry="9" opacity="0.1"/><ellipse cx="406" cy="258" rx="7" ry="7" opacity="0.08"/><ellipse cx="779" cy="365" rx="8" ry="8" opacity="0.08"/><ellipse cx="607" cy="500" rx="8" ry="7" opacity="0.08"/><ellipse cx="800" cy="728" rx="9" ry="8" opacity="0.09"/><ellipse cx="655" cy="759" rx="8" ry="8" opacity="0.08"/><ellipse cx="576" cy="855" rx="8" ry="9" opacity="0.09"/><ellipse cx="358" cy="496" rx="7" ry="7" opacity="0.07"/><ellipse cx="703" cy="241" rx="7" ry="7" opacity="0.07"/><ellipse cx="469" cy="193" rx="8" ry="6" opacity="0.07"/></g><rect x="462" y="623" width="10" height="30" opacity="0.45"/><path d="M365 103L724 96M807 172V794M565 414L710 235M206 55L241 131M303 242L365 376L361 497M0 635L68 711L130 759L178 780M468 656L551 683L620 746L689 787L779 856M468 483V870M311 625H391M354 560V700M587 0V80M0 150L60 260M90 480L200 560" stroke="#000" stroke-width="2" fill="none" opacity="0.1"/></g></g>
<path d="M1276 198h2v876h-2zM2148 198h2v876h-2zM1276 198h874v2h-874zM1276 1072h874v2h-874zM1276 1074h2v10h-2zM1266 198h10v2h-10zM1383 1074h2v10h-2zM1266 305h10v2h-10zM1489 1074h2v10h-2zM1266 411h10v2h-10zM1595 1074h2v10h-2zM1266 518h10v2h-10zM1702 1074h2v10h-2zM1266 625h10v2h-10zM1808 1074h2v10h-2zM1266 731h10v2h-10zM1915 1074h2v10h-2zM1266 838h10v2h-10zM2021 1074h2v10h-2zM1266 945h10v2h-10zM2128 1074h2v10h-2zM1266 1052h10v2h-10z" shape-rendering="crispEdges"/>
<text class="tl" transform="translate(1276.5 1112.3) scale(1.09 1)" text-anchor="middle">0</text>
<text class="tl" transform="translate(1256.8 209.5) scale(1.09 1)" text-anchor="end">0</text>
<text class="tl" transform="translate(1383 1112.3) scale(1.09 1)" text-anchor="middle">250</text>
<text class="tl" transform="translate(1256.8 316.2) scale(1.09 1)" text-anchor="end">250</text>
<text class="tl" transform="translate(1489.5 1112.3) scale(1.09 1)" text-anchor="middle">500</text>
<text class="tl" transform="translate(1256.8 422.9) scale(1.09 1)" text-anchor="end">500</text>
<text class="tl" transform="translate(1596 1112.3) scale(1.09 1)" text-anchor="middle">750</text>
<text class="tl" transform="translate(1256.8 529.6) scale(1.09 1)" text-anchor="end">750</text>
<text class="tl" transform="translate(1702.5 1112.3) scale(1.09 1)" text-anchor="middle">1000</text>
<text class="tl" transform="translate(1256.8 636.3) scale(1.09 1)" text-anchor="end">1000</text>
<text class="tl" transform="translate(1809 1112.3) scale(1.09 1)" text-anchor="middle">1250</text>
<text class="tl" transform="translate(1256.8 743) scale(1.09 1)" text-anchor="end">1250</text>
<text class="tl" transform="translate(1915.5 1112.3) scale(1.09 1)" text-anchor="middle">1500</text>
<text class="tl" transform="translate(1256.8 849.7) scale(1.09 1)" text-anchor="end">1500</text>
<text class="tl" transform="translate(2022 1112.3) scale(1.09 1)" text-anchor="middle">1750</text>
<text class="tl" transform="translate(1256.8 956.3) scale(1.09 1)" text-anchor="end">1750</text>
<text class="tl" transform="translate(2128.5 1112.3) scale(1.09 1)" text-anchor="middle">2000</text>
<text class="tl" transform="translate(1256.8 1063) scale(1.09 1)" text-anchor="end">2000</text>
<text class="tt" transform="translate(1712.3 182) scale(1.118 1)" text-anchor="middle">degaped image</text>
</svg>
</body></html>
